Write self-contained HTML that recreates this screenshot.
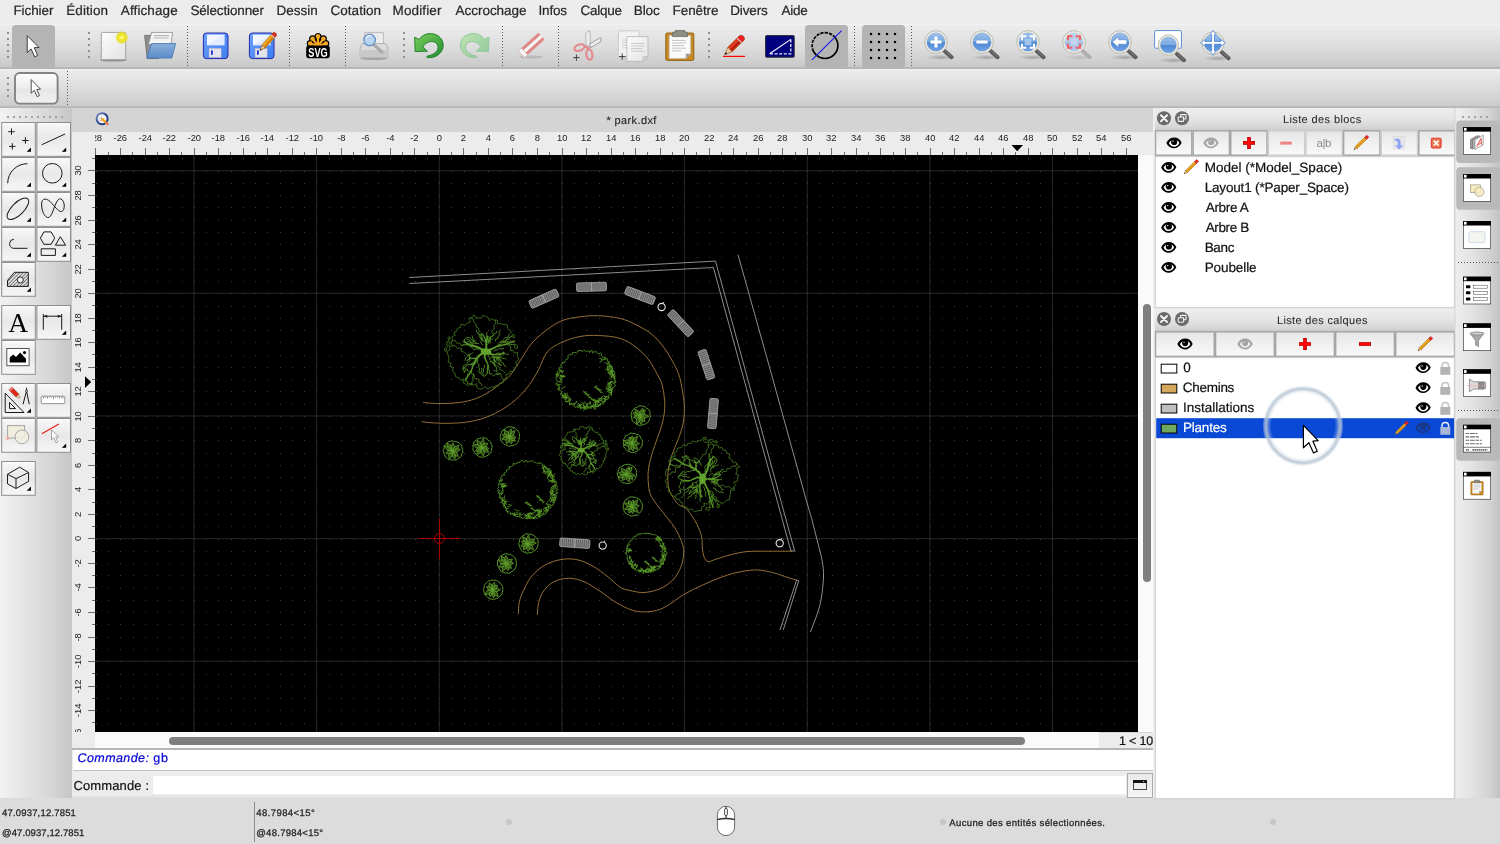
<!DOCTYPE html>
<html lang="fr">
<head>
<meta charset="utf-8">
<title>* park.dxf - QCAD</title>
<style>
html,body{margin:0;padding:0;}
body{width:1500px;height:844px;overflow:hidden;background:#ececec;font-family:"Liberation Sans",sans-serif;color:#262626;position:relative;}
.a{position:absolute;}
.t{position:absolute;white-space:pre;font-family:"Liberation Sans",sans-serif;text-rendering:geometricPrecision;-webkit-text-stroke:0.2px currentColor;}
svg{position:absolute;overflow:visible;}
#menubar{left:0;top:0;width:1500px;height:24px;background:#ececec;}
#tb1{left:0;top:24px;width:1500px;height:45px;background:linear-gradient(#f5f5f5 0%,#ededed 2.5%,#dddddd 50%,#cacaca 94.5%,#b8b8b8 96.5%,#b6b6b6 99%,#c6c6c6 100%);}
#tb2{left:0;top:69px;width:1500px;height:39px;background:linear-gradient(#f2f2f2 0%,#ececec 3%,#dcdcdc 50%,#cccccc 94.5%,#b8b8b8 96.5%,#b6b6b6 100%);}
#left{left:0;top:108px;width:72px;height:690px;background:linear-gradient(90deg,#f2f2f2 0%,#e6e6e6 30%,#d4d4d4 75%,#c6c6c6 100%);}
#mdi{left:72px;top:108px;width:1081px;height:640px;background:#d4d4d4;}
#rtop{left:72px;top:132px;width:1081px;height:23px;background:#ececec;}
#rleft{left:72px;top:132px;width:23px;height:616px;background:#ececec;}
#canvas{left:95px;top:155px;width:1043px;height:577px;background:#000;overflow:hidden;}
#vs{left:1138px;top:155px;width:15px;height:577px;background:#fafafa;}
#hs{left:95px;top:732px;width:1004px;height:16px;background:#fafafa;}
#zl{left:1099px;top:733px;width:54px;height:15px;background:#ececec;}
#cmd{left:72px;top:748px;width:1081px;height:50px;background:#ececec;}
#rdock{left:1153px;top:108px;width:301px;height:690px;background:#ececec;}
#rtb{left:1454px;top:108px;width:46px;height:690px;background:linear-gradient(90deg,#f0f0f0 0%,#e4e4e4 35%,#d2d2d2 80%,#c4c4c4 100%);}
#status{left:0;top:798px;width:1500px;height:46px;background:#dcdcdc;}
.thumb{position:absolute;background:#7f7f7f;border-radius:4px;}
.lb{position:absolute;width:34px;height:34px;box-sizing:border-box;border:1px solid #b4b4b4;background:linear-gradient(#fbfbfb 0%,#f1f1f1 45%,#e6e6e6 50%,#f3f3f3 100%);}
.pb{position:absolute;box-sizing:border-box;border:1px solid #b4b4b4;background:linear-gradient(#fafafa 0%,#efefef 45%,#e4e4e4 55%,#f2f2f2 100%);}
.hdr{position:absolute;background:linear-gradient(#f1f1f1 0%,#e6e6e6 50%,#d6d6d6 100%);}
.list{position:absolute;background:#fff;box-sizing:border-box;border:1px solid #c2c2c2;}
</style>
</head>
<body>
<div id="app" class="a" style="left:0;top:0;width:1500px;height:844px;will-change:transform;">
<div id="menubar" class="a"></div>
<div id="tb1" class="a"></div>
<div id="tb2" class="a"></div>
<div id="left" class="a"></div>
<div id="mdi" class="a"></div>
<div id="rtop" class="a"></div>
<div id="rleft" class="a"></div>
<div id="vs" class="a"><div class="thumb" style="left:5.1px;top:148.7px;width:7.8px;height:278.7px;"></div></div>
<div id="hs" class="a"><div class="thumb" style="left:73.7px;top:5.2px;width:856.8px;height:7.6px;"></div></div>
<div id="zl" class="a"></div>
<div id="cmd" class="a">
 <div class="a" style="left:0;top:0;width:1081px;height:1.5px;background:#b6b6b6"></div>
 <div class="a" style="left:1px;top:1.5px;width:1080px;height:20.5px;background:#fff"></div>
 <div class="a" style="left:1px;top:22px;width:1080px;height:1px;background:#c2c2c2"></div>
 <div class="a" style="left:81px;top:28px;width:973px;height:18px;background:#fff"></div>
 <div class="a" style="left:0;top:46px;width:1055px;height:4px;background:linear-gradient(#efefef,#dedede)"></div>
 <div class="pb" style="left:1055px;top:24.5px;width:26px;height:25.5px;border-color:#ababab;background:linear-gradient(#e9e9e9,#f5f5f5)"></div>
 <svg width="14" height="10" viewBox="0 0 14 10" style="left:1061px;top:32px"><rect x="0.5" y="0.5" width="13" height="9" fill="#f0f0f0" stroke="#4a4a4a"/><rect x="0" y="0" width="14" height="3" fill="#111"/><rect x="10" y="1" width="1.2" height="1" fill="#ccc"/></svg>
</div>
<div id="rdock" class="a"></div>
<div id="rtb" class="a"></div>
<div id="status" class="a">
 <div class="a" style="left:253.5px;top:4px;width:1px;height:40px;background:#8c8c8c"></div>
 <div class="a" style="left:506.3px;top:21px;width:6px;height:6px;border-radius:3px;background:#c6c6c6"></div>
 <div class="a" style="left:940.3px;top:21px;width:6px;height:6px;border-radius:3px;background:#c6c6c6"></div>
 <div class="a" style="left:1269.5px;top:21px;width:6px;height:6px;border-radius:3px;background:#c6c6c6"></div>
</div>
<svg class="a" width="1043" height="23" viewBox="0 0 1043 23" style="left:95px;top:132px;overflow:hidden" font-family="Liberation Sans, sans-serif" font-size="9.4" fill="#1c1c1c" text-anchor="middle"><text x="0.3" y="9.1">-28</text><text x="25.3" y="9.1">-26</text><text x="50.3" y="9.1">-24</text><text x="74.3" y="9.1">-22</text><text x="99.3" y="9.1">-20</text><text x="123.3" y="9.1">-18</text><text x="148.3" y="9.1">-16</text><text x="172.3" y="9.1">-14</text><text x="197.3" y="9.1">-12</text><text x="221.3" y="9.1">-10</text><text x="246.3" y="9.1">-8</text><text x="270.3" y="9.1">-6</text><text x="295.3" y="9.1">-4</text><text x="319.3" y="9.1">-2</text><text x="344.3" y="9.1">0</text><text x="368.3" y="9.1">2</text><text x="393.3" y="9.1">4</text><text x="417.3" y="9.1">6</text><text x="442.3" y="9.1">8</text><text x="467.3" y="9.1">10</text><text x="491.3" y="9.1">12</text><text x="516.3" y="9.1">14</text><text x="540.3" y="9.1">16</text><text x="565.3" y="9.1">18</text><text x="589.3" y="9.1">20</text><text x="614.3" y="9.1">22</text><text x="638.3" y="9.1">24</text><text x="663.3" y="9.1">26</text><text x="687.3" y="9.1">28</text><text x="712.3" y="9.1">30</text><text x="736.3" y="9.1">32</text><text x="761.3" y="9.1">34</text><text x="785.3" y="9.1">36</text><text x="810.3" y="9.1">38</text><text x="835.3" y="9.1">40</text><text x="859.3" y="9.1">42</text><text x="884.3" y="9.1">44</text><text x="908.3" y="9.1">46</text><text x="933.3" y="9.1">48</text><text x="957.3" y="9.1">50</text><text x="982.3" y="9.1">52</text><text x="1006.3" y="9.1">54</text><text x="1031.3" y="9.1">56</text><path d="M0.5 16V23M25.5 16V23M50.5 16V23M74.5 16V23M99.5 16V23M123.5 16V23M148.5 16V23M172.5 16V23M197.5 16V23M221.5 16V23M246.5 16V23M270.5 16V23M295.5 16V23M319.5 16V23M344.5 16V23M368.5 16V23M393.5 16V23M417.5 16V23M442.5 16V23M467.5 16V23M491.5 16V23M516.5 16V23M540.5 16V23M565.5 16V23M589.5 16V23M614.5 16V23M638.5 16V23M663.5 16V23M687.5 16V23M712.5 16V23M736.5 16V23M761.5 16V23M785.5 16V23M810.5 16V23M835.5 16V23M859.5 16V23M884.5 16V23M908.5 16V23M933.5 16V23M957.5 16V23M982.5 16V23M1006.5 16V23M1031.5 16V23M13.5 20V23M37.5 20V23M62.5 20V23M86.5 20V23M111.5 20V23M135.5 20V23M160.5 20V23M184.5 20V23M209.5 20V23M234.5 20V23M258.5 20V23M283.5 20V23M307.5 20V23M332.5 20V23M356.5 20V23M381.5 20V23M405.5 20V23M430.5 20V23M454.5 20V23M479.5 20V23M503.5 20V23M528.5 20V23M552.5 20V23M577.5 20V23M601.5 20V23M626.5 20V23M651.5 20V23M675.5 20V23M700.5 20V23M724.5 20V23M749.5 20V23M773.5 20V23M798.5 20V23M822.5 20V23M847.5 20V23M871.5 20V23M896.5 20V23M920.5 20V23M945.5 20V23M969.5 20V23M994.5 20V23M1018.5 20V23M1043.5 20V23" stroke="#6e6e6e" stroke-width="1" fill="none" shape-rendering="crispEdges"/><path d="M916.5 13H928L922.2 19.2Z" fill="#000"/></svg>
<svg class="a" width="23" height="577" viewBox="0 0 23 577" style="left:72px;top:155px;overflow:hidden" font-family="Liberation Sans, sans-serif" font-size="9.4" fill="#1c1c1c" text-anchor="middle"><text transform="translate(9.4 580.4) rotate(-90)">-16</text><text transform="translate(9.4 555.4) rotate(-90)">-14</text><text transform="translate(9.4 531.4) rotate(-90)">-12</text><text transform="translate(9.4 506.4) rotate(-90)">-10</text><text transform="translate(9.4 482.4) rotate(-90)">-8</text><text transform="translate(9.4 457.4) rotate(-90)">-6</text><text transform="translate(9.4 432.4) rotate(-90)">-4</text><text transform="translate(9.4 408.4) rotate(-90)">-2</text><text transform="translate(9.4 383.4) rotate(-90)">0</text><text transform="translate(9.4 359.4) rotate(-90)">2</text><text transform="translate(9.4 334.4) rotate(-90)">4</text><text transform="translate(9.4 310.4) rotate(-90)">6</text><text transform="translate(9.4 285.4) rotate(-90)">8</text><text transform="translate(9.4 261.4) rotate(-90)">10</text><text transform="translate(9.4 236.4) rotate(-90)">12</text><text transform="translate(9.4 212.4) rotate(-90)">14</text><text transform="translate(9.4 187.4) rotate(-90)">16</text><text transform="translate(9.4 163.4) rotate(-90)">18</text><text transform="translate(9.4 138.4) rotate(-90)">20</text><text transform="translate(9.4 114.4) rotate(-90)">22</text><text transform="translate(9.4 89.4) rotate(-90)">24</text><text transform="translate(9.4 65.4) rotate(-90)">26</text><text transform="translate(9.4 40.4) rotate(-90)">28</text><text transform="translate(9.4 15.4) rotate(-90)">30</text><path d="M16 580.5H23M16 555.5H23M16 531.5H23M16 506.5H23M16 482.5H23M16 457.5H23M16 432.5H23M16 408.5H23M16 383.5H23M16 359.5H23M16 334.5H23M16 310.5H23M16 285.5H23M16 261.5H23M16 236.5H23M16 212.5H23M16 187.5H23M16 163.5H23M16 138.5H23M16 114.5H23M16 89.5H23M16 65.5H23M16 40.5H23M16 15.5H23M20 567.5H23M20 543.5H23M20 518.5H23M20 494.5H23M20 469.5H23M20 445.5H23M20 420.5H23M20 396.5H23M20 371.5H23M20 347.5H23M20 322.5H23M20 298.5H23M20 273.5H23M20 248.5H23M20 224.5H23M20 199.5H23M20 175.5H23M20 150.5H23M20 126.5H23M20 101.5H23M20 77.5H23M20 52.5H23M20 28.5H23M20 3.5H23" stroke="#6e6e6e" stroke-width="1" fill="none" shape-rendering="crispEdges"/><path d="M13 221.2V233L19.2 227Z" fill="#000"/></svg>
<div id="canvas" class="a"><svg width="1043" height="577" viewBox="0 0 1043 577" style="left:0;top:0">
<defs><pattern id="hb" width="2" height="2" patternUnits="userSpaceOnUse"><rect width="2" height="2" fill="#5c5c5c"/><rect width="1" height="2" fill="#8c8c8c"/></pattern></defs>
<path d="M99.00 0V577M221.65 0V577M344.30 0V577M466.95 0V577M589.60 0V577M712.25 0V577M834.90 0V577M957.55 0V577M0 506.25H1043M0 383.60H1043M0 260.95H1043M0 138.30H1043M0 15.65H1043" stroke="#262626" stroke-width="1" fill="none"/>
<path d="M1.5 0V577M13.5 0V577M25.5 0V577M38.5 0V577M50.5 0V577M62.5 0V577M74.5 0V577M87.5 0V577M99.5 0V577M111.5 0V577M123.5 0V577M136.5 0V577M148.5 0V577M160.5 0V577M172.5 0V577M185.5 0V577M197.5 0V577M209.5 0V577M221.5 0V577M234.5 0V577M246.5 0V577M258.5 0V577M271.5 0V577M283.5 0V577M295.5 0V577M307.5 0V577M320.5 0V577M332.5 0V577M344.5 0V577M356.5 0V577M369.5 0V577M381.5 0V577M393.5 0V577M405.5 0V577M418.5 0V577M430.5 0V577M442.5 0V577M455.5 0V577M467.5 0V577M479.5 0V577M491.5 0V577M504.5 0V577M516.5 0V577M528.5 0V577M540.5 0V577M553.5 0V577M565.5 0V577M577.5 0V577M589.5 0V577M602.5 0V577M614.5 0V577M626.5 0V577M639.5 0V577M651.5 0V577M663.5 0V577M675.5 0V577M688.5 0V577M700.5 0V577M712.5 0V577M724.5 0V577M737.5 0V577M749.5 0V577M761.5 0V577M773.5 0V577M786.5 0V577M798.5 0V577M810.5 0V577M822.5 0V577M835.5 0V577M847.5 0V577M859.5 0V577M872.5 0V577M884.5 0V577M896.5 0V577M908.5 0V577M921.5 0V577M933.5 0V577M945.5 0V577M957.5 0V577M970.5 0V577M982.5 0V577M994.5 0V577M1006.5 0V577M1019.5 0V577M1031.5 0V577" stroke="#3f3f3f" stroke-width="1" fill="none" stroke-dasharray="0 3 1 12 1 11 1 11 1 11 1 12 1 11 1 11 1 12 1 11 1 11 1 11 1 12 1 11 1 11 1 11 1 12 1 11 1 11 1 11 1 12 1 11 1 11 1 11 1 12 1 11 1 11 1 12 1 11 1 11 1 11 1 12 1 11 1 11 1 11 1 12 1 11 1 11 1 11 1 12 1 11 1 11 1 12 1 11 1 11 1 11 1 12 1 58" shape-rendering="crispEdges"/>
<g fill="none" stroke="#a47a3c" stroke-width="0.9">
<path d="M328.2 247.5C331 247.7 339 248.6 345 248.6C351 248.6 358.3 248.3 364.2 247.5C370.1 246.7 375.1 245.6 380.2 243.8C385.3 242 390.1 239.4 394.6 236.6C399.1 233.8 403.9 229.8 407.4 227C410.9 224.2 412.2 223.9 415.4 220C418.6 216.1 423.1 208.6 426.6 203.4C430.1 198.2 432.5 193.4 436.2 189C439.9 184.6 443.9 180.9 449 177C454.1 173.1 460.6 168.3 466.6 165.8C472.6 163.3 478.9 162.7 485 161.8C491.1 161 496.7 160.4 503.4 160.7C510.1 161 518.7 161.9 525 163.4C531.3 164.9 535.7 167.1 541 169.8C546.3 172.5 552.2 175.4 557 179.4C561.8 183.4 566.1 188.7 569.8 193.8C573.5 198.9 577 205.4 579.4 209.8C581.8 214.2 582.7 216.5 583.9 220C585.1 223.5 585.7 226 586.6 231C587.5 236 589 244.1 589.3 250.2C589.6 256.3 589.2 262.2 588.2 267.8C587.2 273.4 585.3 278.5 583.4 283.8C581.5 289.1 578.7 294.2 577 299.8C575.3 305.4 573.5 311.8 573 317.4C572.5 323 572.7 328.9 573.8 333.4C574.9 337.9 577.7 341.8 579.4 344.6C581.1 347.4 582.1 348.3 584.2 350C586.3 351.7 589.3 351.4 592.2 354.6C595.1 357.8 599.4 364.5 601.8 369C604.2 373.5 605.7 377.8 606.6 381.8C607.5 385.8 607 389.7 607.4 393C607.8 396.3 608.1 399.5 609 401.8C609.9 404.1 611 406.2 613 406.6C615 407 617 405.4 621 404.2C625 403 631.7 400.7 637 399.4C642.3 398.1 646.7 397 653 396.5C659.3 396 667.7 396.3 675 396.2C682.3 396.2 693.3 396.2 697 396.2"/>
<path d="M326.6 266.7C328.3 266.9 332.6 267.5 337 267.8C341.4 268.1 347.1 268.4 353 268.3C358.9 268.2 365.8 268 372.2 267C378.6 266 385.3 264.5 391.4 262.2C397.5 259.9 403.7 256.7 409 253.4C414.3 250.1 419.1 246.2 423.4 242.2C427.7 238.2 431.3 233.9 434.6 229.4C437.9 224.9 440.5 220.4 443.4 215C446.3 209.6 448.3 201.6 452.2 197C456.1 192.4 461.1 190 466.6 187.4C472.1 184.8 478.9 182.7 485 181.5C491.1 180.3 496.7 180.2 503.4 180.5C510.1 180.8 518.7 181.4 525 183.4C531.3 185.3 536.2 188.6 541 192.2C545.8 195.8 550.2 200.4 553.8 205C557.4 209.6 560.3 215.7 562.6 220C564.9 224.3 566.2 226 567.4 231C568.6 236 569.8 244.1 569.8 250.2C569.8 256.3 568.9 261.7 567.4 267.8C565.9 273.9 563 280.9 561 287C559 293.1 556.7 299 555.4 304.6C554.1 310.2 553.1 315.3 553 320.6C552.9 325.9 553.7 332.5 554.6 336.6C555.5 340.7 556.3 341.5 558.6 345C560.9 348.5 564.7 353.3 568.2 357.8C571.7 362.3 576.3 367.4 579.4 372.2C582.5 377 585 382.3 586.6 386.6C588.2 390.9 588.8 393.5 588.7 397.8C588.6 402.1 587.6 407.7 585.8 412.2C584 416.7 581.3 421.4 577.8 425C574.3 428.6 569.8 431.7 565 433.8C560.2 435.9 554.1 437.2 549 437.5C543.9 437.8 538.6 436.3 534.6 435.4C530.6 434.5 528.6 434.5 525 432.2C521.4 429.9 517.7 425.4 513 421.8C508.3 418.2 502.3 413.5 497 410.6C491.7 407.7 486.3 405.5 481 404.5C475.7 403.5 470.3 403.7 465 404.7C459.7 405.7 453.8 407.8 449 410.6C444.2 413.4 439.7 417.5 436.2 421.8C432.7 426.1 430.2 431.9 428.2 436.2C426.2 440.5 425 443.6 424.2 447.4C423.4 451.2 423.5 457.1 423.4 459"/>
<path d="M442.3 459.9C442.5 458.1 442.5 452.7 443.4 449C444.2 445.3 445.4 441.1 447.4 437.8C449.4 434.5 452.5 431.2 455.4 429C458.3 426.8 461.5 425.4 465 424.5C468.5 423.6 472.2 423 476.2 423.4C480.2 423.8 484.2 424.5 489 426.6C493.8 428.7 499.7 432.7 505 436.2C510.3 439.7 515.5 444.2 521 447.4C526.5 450.6 532.3 453.8 537.8 455.4C543.3 456.9 548.5 457.2 553.8 456.7C559.1 456.2 563.9 455.1 569.8 452.2C575.7 449.3 582.6 443.1 589 439.4C595.4 435.7 601.8 432.7 608.2 429.8C614.6 426.9 621 424 627.4 421.8C633.8 419.6 640.7 417.6 646.6 416.5C652.5 415.4 657.3 414.8 662.6 415C667.9 415.2 673.5 416.5 678.6 417.8C683.7 419.1 689.1 421.4 693 422.6C696.9 423.8 700.3 424.6 701.8 425"/>
</g>
<g fill="none" stroke="#b0b0b0" stroke-width="0.8">
<path d="M314.3 122.5L620.5 106.1L699.6 396"/>
<path d="M314.6 128.5L618.4 112.5L695.9 396"/>
<path d="M695.9 396L699.6 396"/>
<path d="M701.6 425L685 475"/>
<path d="M703.8 425.6L688.2 475"/>
<path d="M701.6 425L703.8 425.6"/>
<path d="M643 99.7L676.7 220L711.2 345"/>
<path d="M711.2 345C712.2 348.3 715.2 358.3 717 365C718.8 371.7 720.4 378.3 722.1 385C723.8 391.7 725.9 398.8 727 405C728.1 411.2 728.7 415.3 728.5 422C728.3 428.7 727.2 438.5 726 445C724.8 451.5 723.3 455.7 721.5 461C719.7 466.3 716.4 474.3 715.4 477"/>
</g>
<g transform="translate(448.9 143.7) rotate(-24)"><rect x="-15.0" y="-4.2" width="30" height="8.4" rx="1.5" fill="url(#hb)" stroke="#a8a8a8" stroke-width="0.8"/><path d="M0 -4.2V4.2" stroke="#b8b8b8" stroke-width="0.7"/><path d="M-14.0 0H14.0" stroke="#7a7a7a" stroke-width="0.6" opacity="0.6"/></g>
<g transform="translate(496.5 131.9) rotate(-1.5)"><rect x="-15.0" y="-4.3" width="30" height="8.6" rx="1.5" fill="url(#hb)" stroke="#a8a8a8" stroke-width="0.8"/><path d="M0 -4.3V4.3" stroke="#b8b8b8" stroke-width="0.7"/><path d="M-14.0 0H14.0" stroke="#7a7a7a" stroke-width="0.6" opacity="0.6"/></g>
<g transform="translate(545 140.5) rotate(21)"><rect x="-15.25" y="-4.2" width="30.5" height="8.4" rx="1.5" fill="url(#hb)" stroke="#a8a8a8" stroke-width="0.8"/><path d="M0 -4.2V4.2" stroke="#b8b8b8" stroke-width="0.7"/><path d="M-14.25 0H14.25" stroke="#7a7a7a" stroke-width="0.6" opacity="0.6"/></g>
<g transform="translate(585.6 168.2) rotate(47)"><rect x="-15.25" y="-4.2" width="30.5" height="8.4" rx="1.5" fill="url(#hb)" stroke="#a8a8a8" stroke-width="0.8"/><path d="M0 -4.2V4.2" stroke="#b8b8b8" stroke-width="0.7"/><path d="M-14.25 0H14.25" stroke="#7a7a7a" stroke-width="0.6" opacity="0.6"/></g>
<g transform="translate(611.4 209.6) rotate(72)"><rect x="-15.0" y="-4.2" width="30" height="8.4" rx="1.5" fill="url(#hb)" stroke="#a8a8a8" stroke-width="0.8"/><path d="M0 -4.2V4.2" stroke="#b8b8b8" stroke-width="0.7"/><path d="M-14.0 0H14.0" stroke="#7a7a7a" stroke-width="0.6" opacity="0.6"/></g>
<g transform="translate(618 258.5) rotate(95)"><rect x="-15.0" y="-4.3" width="30" height="8.6" rx="1.5" fill="url(#hb)" stroke="#a8a8a8" stroke-width="0.8"/><path d="M0 -4.3V4.3" stroke="#b8b8b8" stroke-width="0.7"/><path d="M-14.0 0H14.0" stroke="#7a7a7a" stroke-width="0.6" opacity="0.6"/></g>
<g transform="translate(479.8 388.2) rotate(4)"><rect x="-15.0" y="-4.3" width="30" height="8.6" rx="1.5" fill="url(#hb)" stroke="#a8a8a8" stroke-width="0.8"/><path d="M0 -4.3V4.3" stroke="#b8b8b8" stroke-width="0.7"/><path d="M-14.0 0H14.0" stroke="#7a7a7a" stroke-width="0.6" opacity="0.6"/></g>
<g transform="translate(566.6 152)" fill="none" stroke="#e6e6e6"><circle r="3.6" stroke-width="1.1"/><path d="M1.2 -4.2L2.6 -4.8" stroke-width="0.9"/></g>
<g transform="translate(507.7 390.6)" fill="none" stroke="#e6e6e6"><circle r="3.6" stroke-width="1.1"/><path d="M1.2 -4.2L2.6 -4.8" stroke-width="0.9"/></g>
<g transform="translate(684.7 388.2)" fill="none" stroke="#e6e6e6"><circle r="3.6" stroke-width="1.1"/><path d="M1.2 -4.2L2.6 -4.8" stroke-width="0.9"/></g>
<g fill="none" stroke="#ac0000" stroke-width="1"><path d="M324.0 383.5H365.0M344.5 363.5V404.0"/><circle cx="344.5" cy="383.5" r="5"/></g>
<g stroke-linejoin="round">
<g transform="translate(390.6 196.4) rotate(0) scale(1.0 1.0)" fill="none" stroke="#477c1f" stroke-width="0.800"><path d="M-37.4 3.9L-38.8 0.3L-36 -1.6L-36 -5L-32.5 -6L-35 -8.4L-33.4 -10.8L-33.5 -14.9L-30.4 -16L-31.6 -19.2L-28.8 -20.3L-28.2 -23.2L-25.3 -23.8L-24.4 -27.4L-20.4 -26L-18.2 -28.5L-15.2 -29.7L-16.8 -33.2L-13.9 -33.6L-11.7 -36.8L-9.9 -33.7L-7.2 -33.6L-4.3 -33.1L-3 -35.7L-1.1 -35.5L2.2 -34.3L3.8 -30.8L6.3 -32.7L8.3 -31.3L11.8 -31.2L11.9 -27.7L14.1 -27.8L17.9 -27L21.6 -26.4L22 -22.9L25.9 -19.5L23.2 -16.8L21.6 -12.7L18 -8.4L21.9 -9.4L23.1 -6.8L25.3 -4.4L24.7 -0.8L27.5 -1.1L28.7 1.7L32.3 1.2L31.7 4.5L33.2 8.2L30 10.8L32 14.3L29.4 16.1L27.5 20.4L24.4 19.5L23.8 22.4L20.3 23.2L20.9 26.7L18.1 27.8L17.4 31.4L13.9 31.9L12.6 34.8L9.8 34.3L8.4 36.7L6.1 35.3L2.5 37.5L-0.8 35L-3.5 37.6L-6.3 37.5L-8.6 36L-8.9 32.3L-11.8 34.1L-14.5 31.9L-17 34.3L-19 33.2L-22.2 31.5L-22.2 27.5L-25 28.9L-26.6 26.7L-30.1 25.1L-30.7 21.6L-33.3 19.5L-32.2 16L-35.7 14.9L-34.5 11.9L-37.6 10.6L-36.5 6.7ZM-33.9 -10.4L-30.5 -11.2L-28.8 -8.1L-25.8 -8.4L-24 -5.4L-20.8 -7.4L-17.6 -6.7M23.7 -16.1L22.4 -13.4L19.2 -14L17.5 -10.6L13.9 -9.4L11.7 -5.3M-33.8 -5.3L-30.4 -5.7L-28.2 -3L-24.3 -3.3L-24 -0L-21.4 0.7L-18.7 3.5L-15.6 4.4L-16.1 6.5L-15.4 9.6L-18.1 10.7L-18.9 13.4L-22 13.9L-22.9 16.5M17.6 0L18.3 3L16.4 4.1L14.2 6.3L11.3 4.4L9.7 6.2L7.3 8.4L8.9 10.3L9.4 14L12.9 14.8L14 18.1L17.4 19.3L19.7 21.9M-23.4 17.7L-19.8 16.9L-17.6 19.7L-13.7 19.4L-14.3 22.4L-11.2 23.5L-11.3 26.8L-6.3 27.9L-6.9 30.9L-4.3 32.2L-3.7 34.6M7.6 19.3L10.7 19.3L11.6 22.5L15.2 22.3L15.9 26.1L18.7 28.3M-15.5 -34L-12.4 -32.5L-12 -29.4L-9.5 -27.6L-9.6 -24.6L-7 -23.2L-6.7 -20.4L-4.8 -18.7M9.3 -31.7L10.4 -28.4L8.1 -25.9L8.8 -22.7L6.1 -20.4L7.8 -16.9L5.9 -14.4M29.3 -7.5L32 -5.9L31.4 -2.7L29.1 -3.7ZM26.7 -17.1L29.3 -16L28.8 -13.9L26.3 -14.4ZM-38.9 -9.6L-36.8 -10.7L-35.9 -6.9L-38.4 -4.8ZM-41.3 -2.7L-39.4 -3.7L-38.9 -1.1L-40.5 0ZM-37.6 -13.9L-35.9 -14.6L-35.5 -12.3L-37.3 -11.7Z"/><path d="M-4.2 -18L-4.9 -14.7L-4.1 -12L-2.1 -10.4L0 -9.6M1.3 -15.2L4 -14.3L2.6 -12.1L2.7 -9.6M5.5 -14.7L4.3 -11.4L4.8 -8M-21.7 -11L-20 -13.2L-17.8 -14.1L-15.4 -13.5L-14.1 -11.5L-11.5 -10L-10.1 -7.5M-23 -9.3L-20.7 -9.5L-19.1 -8.3L-17.6 -6.7M-24.1 -6.2L-20.9 -6.4L-17.6 -6.7M11.5 -4.6L12.8 -6.6L15.2 -6.8L16.6 -8.8L18.7 -9.1L20.6 -10.4L22.8 -9.5L24.7 -10.6L26.8 -9.9L28.8 -10.7M18.7 -6.2L20.8 -7.2L22.9 -6.2L25 -7.1L27.3 -6.6L29.3 -7.5M14.5 -8.6L16.4 -10L18.8 -10L20.4 -11.7L23.1 -12.2L24.4 -14.4L26.7 -15.5M-14.7 19.4L-15.6 21.7L-18 22.7L-18 24.9L-19.7 26.4L-19.7 28.6L-20.8 30.4M-20.2 28.5L-18.4 30L-17.8 32.4L-15.6 32.4L-13.5 33.6L-13.8 30.8L-12.4 28.3L-13.1 26.1L-11.9 24L-12.3 21.9M-12.3 13L-14.9 13.6L-17.8 13L-19.7 15.3L-22.7 16.6L-21.7 18.6L-21.3 21.2L-19.9 18.8L-17.6 17.6M1.3 21.6L0.4 23.9L-1.3 24.9L-3.1 21.8L-2 19.8L-2.3 17.5L-0.9 15.6L-1.1 13.3M1.9 13.4L3.3 15.4L2.7 17.6L3.9 19.7L3.6 22.2L6 22.7L8.1 24.4L10 22.8L12.4 23.1L14.4 21.9M-4.2 16.4L-3.7 19.3L-5.1 22.1L-3.2 23.3L-2.1 25.1M14.1 2.6L13.3 5.1L11.3 6.8L10.4 9.3L8.5 11.2M-15.1 6.7L-17.2 3.5L-15.2 6.9M-9.4 7L-7.8 8.9L-8.2 11.4L-6.5 13.3L-6.9 15.5L-6.1 17.6L-6.7 19.8L-5.9 21.9M3 -7.6L3.7 -11.2L6.1 -11.8L7.8 -13.4M-6.6 -7.9L-9.3 -7.8L-11.4 -9.9L-13.8 -8.9L-16.2 -9.7L-18.6 -9.2M11 7L15 5.5L16.6 7.2L18.8 6.8L20.6 8M11.6 6.4L14 7.8L15.1 10.2L17.5 11.5L18.5 14.1L20.7 15.5M7.1 6L9 7.2L8.9 9.7L10.8 10.5L12.9 12.9L15.8 13.6M-6.6 -1.9L-8.9 -2.5L-10.1 -4.6L-12.8 -4.8L-15.1 -6.1M-9.5 11.3L-11.5 13.4L-13.8 12.4L-16 13M6.1 4.8L8.5 6.3L9.1 8.8L9.7 10.4M-12.8 0.9L-14.2 2.7L-16.4 2.9L-17.6 4.4L-19.9 6.5L-20.6 9.4M5 6.4L7.3 5.4L9.3 6.3L11.9 6.4L13.5 8.5L16 8.8M-2.1 -10.9L-3.8 -13.2L-3.8 -16.2L-6.2 -16.9L-7.6 -18.7M3.9 10.8L6.1 10.1L7.4 12.4L9.7 13.3M1.8 -6.5L0.6 -8.7L1.6 -10.8L0.6 -12.9L1.8 -15L1 -17.1L1.5 -19.2M9.6 -9.9L9.9 -12.2L12.2 -12.9L12.5 -15L14.1 -16.8L13.4 -19.1L14.5 -21M-9.7 -2L-12.1 -2L-13.4 -3.8L-15.5 -5L-16.8 -7M-2.4 -6L-5.1 -8.9L-3.5 -11.4L-3.6 -14.2M4.7 2.2L6.9 2.7L8 4.8L10.3 5L12.3 6.6L14.7 6.9M-9.9 -10.6L-12.3 -11.3L-12.9 -13.3L-13.6 -16M0.2 -6.3L1 -8.3L2.9 -9.3L3.5 -11.4L5.4 -13.4M3.1 -12.3L4.9 -14.7L7.8 -15.5L8.5 -17.7L10.8 -18.6L11.5 -20.7M-9.6 7.6L-10.2 9.8L-12 10.7L-14.7 12.7M-12.3 -7.1L-14.6 -8.4L-15.6 -11L-19.3 -12.4M8.3 0.2L9.7 -1.7L11.9 -1.5L13.6 -3.1L16.1 -2.4L18.4 -3.1M6.1 10L8.4 11.7L8.8 14.5L10.8 15.9L11 18.3L12.5 19.9M1.9 4.8L4.1 6L4.2 8.6L6.9 11.2M-4.6 -12.2L-6.4 -15L-6.5 -17.4L-8.6 -18.7L-9.1 -20.9M10.8 2L13.3 1.6L15.7 2.7L18.2 1.9L20.8 3.1L23.4 2.5M-11.2 -8.2L-13.2 -7L-15.3 -7.5L-17.7 -7.6L-19.5 -8.8M11.5 7.8L13.3 10.4L14.1 12.8L16.1 14.2M-6.9 2.8L-6.5 5.3L-7.8 7.3L-9.2 10L-11.3 12.1" stroke="#5a9a28"/><path d="M-0.5 0.9L-9.3 -4.2L-17.8 -6.3L-22.1 -11L-21.6 -11.4L-17.4 -7.1L-8.8 -5.4L0.5 -0.9ZM-0.9 -0.1L0.1 -4.8L0.1 -9L-1.4 -14.2L-3.9 -17.7L-3.5 -18L-0.8 -14.5L1 -9.1L1.4 -4.8L0.9 0.1ZM0.1 -9.2L1.5 -12.5L1.1 -15.4L1.6 -15.5L2.1 -12.4L0.9 -8.9ZM-0.4 -0.9L6.7 -3.3L11 -5.5L18.6 -7.1L29.2 -10.4L29.4 -9.9L18.8 -6.4L11.4 -4.5L7.2 -2.1L0.4 0.9ZM0.6 0.9L-5.4 4.3L-8.6 7.3L-11.8 13.5L-14.1 19.9L-19.5 28.4L-19.9 28.1L-14.7 19.6L-12.7 13.2L-9.5 6.6L-6.3 3.1L-0.6 -0.9ZM0.9 0.2L-0.5 5.8L2.8 13.3L1.8 21.9L1.4 21.8L2.1 13.4L-1.6 6L-0.9 -0.2ZM0.4 -0.7L6 2.7L14.3 2.5L18.6 0.8L18.8 1.3L14.5 3.2L5.8 3.7L-0.4 0.7ZM-9.1 7.4L-15.4 7.2L-18.5 9.3L-18.8 8.9L-15.5 6.6L-9.1 6.5ZM-4.6 -1L-2.2 -2.6L0.6 -3L3 -2.2L5.4 -0.3L5.6 2L3 3.4L0.4 3.2L-2.4 3L-4.4 1.4Z" fill="#62a42c" stroke="#62a42c" stroke-width="0.500"/></g>
<g transform="translate(486.5 295) rotate(0) scale(-0.66 0.66)" fill="none" stroke="#477c1f" stroke-width="1.212"><path d="M-37.4 4L-38.9 0.3L-36.2 -1.8L-35.8 -4.8L-33 -5.9L-34.8 -8.4L-33.3 -10.8L-33.7 -15L-30.4 -16L-31.4 -19.2L-28.5 -20L-28.4 -23.4L-25.2 -23.8L-24.3 -27.1L-20.5 -26.5L-18.9 -28.9L-15.9 -30.1L-16.7 -33.1L-14.1 -34L-11.7 -36.8L-10 -33.6L-7.3 -33.9L-4.2 -32.8L-2.9 -35.6L-1 -35.6L2.6 -34.7L3.8 -30.4L6.3 -32.4L8 -30.9L11.9 -31.2L12.1 -27.9L14.2 -27.6L18.1 -27.2L21.4 -26.2L21.9 -22.9L25.8 -19.5L23.4 -16.5L20.9 -13.1L18.3 -8.9L21.9 -9.5L23 -6.7L25.5 -4.5L24.5 -0.6L27.7 -1.5L28.9 1.4L32 1.3L31.8 4.5L33.7 8.4L30 10.8L31.8 14.2L29.1 15.9L27.6 20.6L24.5 19.7L23.9 22.5L20.9 23.6L20.8 26.6L18 27.6L17.3 31.4L13.9 31.8L12.7 35L9.9 34.3L8.5 37.1L6 35.8L2.5 37.3L-0.8 34.9L-3.4 37.7L-6.1 37.4L-9.2 36.3L-9 32.9L-11.8 34.4L-14.5 32.3L-16.9 34.5L-19.1 33.3L-21.8 31.3L-22.2 27.3L-25 28.9L-26.7 26.8L-30.1 25.2L-30.7 21.6L-33.3 19.5L-32.6 16.1L-35.8 15L-34.4 11.9L-37.6 10.6L-36.6 6.7ZM-34.1 -10L-30.6 -10.9L-28.6 -8.5L-25.6 -8.9L-24 -5.5L-20.8 -7.3L-17.6 -6.7M23.6 -16.1L22.4 -13.4L19.2 -14L17.5 -10.6L13.9 -9.4L11.7 -5.3M-33.8 -5.3L-30.4 -5.8L-28.4 -2.5L-24 -3.5L-24.1 0.1L-21.5 1.1L-18.3 3.3L-15.4 4.3L-16.3 6.4L-15.5 9.6L-18.1 10.7L-18.7 13.6L-21.8 14.1L-22.9 16.5M17.7 0.1L18.3 3L16.3 3.5L14.2 6.4L11.4 5L9.8 6.2L7.3 8.4L8.5 10.7L9.2 14.2L12.9 14.8L13.7 18.4L17.7 18.9L19.7 21.9M-23.2 17.2L-19.8 16.9L-17.5 19.4L-13.4 19.2L-14.2 22.4L-11.5 23.7L-11.6 27.2L-6.1 27.9L-6.5 30.7L-4 32.1L-3.7 34.6M7.3 19.7L10.7 19.3L11.7 22.4L15.4 22.1L15.5 26.4L18.7 28.3M-15.4 -34.1L-12.2 -32.6L-12.4 -29.2L-9.1 -27.8L-9.8 -24.4L-6.6 -23.4L-6.8 -20.4L-4.8 -18.7M9.3 -31.7L10.5 -28.3L7.8 -26L8.5 -22.8L6.2 -20.3L7.8 -16.9L5.9 -14.4M29.3 -7.5L32 -5.9L31.4 -2.7L29.1 -3.7ZM26.7 -17.1L29.3 -16L28.8 -13.9L26.3 -14.4ZM-38.9 -9.6L-36.8 -10.7L-35.9 -6.9L-38.4 -4.8ZM-41.3 -2.7L-39.4 -3.7L-38.9 -1.1L-40.5 0ZM-37.6 -13.9L-35.9 -14.6L-35.5 -12.3L-37.3 -11.7Z"/><path d="M-4.2 -18L-4.9 -14.7L-4.2 -11.9L-2 -10.6L0 -9.6M1.2 -15L4.1 -14.3L2.9 -12.1L2.7 -9.6M5.6 -14.6L4.1 -11.3L4.8 -8M-21.5 -10.7L-20 -13.2L-17.8 -14L-15.5 -13.4L-14.1 -11.5L-11.7 -9.9L-10.1 -7.5M-23 -9.1L-20.7 -9.4L-18.9 -8.4L-17.6 -6.7M-24.1 -6.3L-20.9 -6.2L-17.6 -6.7M11.5 -4.6L12.9 -6.4L15.1 -7.1L16.6 -8.8L18.7 -9.1L20.6 -10.3L22.8 -9.5L24.7 -10.8L26.8 -10.1L28.8 -10.7M18.7 -6.5L20.8 -7.1L22.9 -6.3L25 -7L27.3 -6.6L29.3 -7.5M14.5 -8.7L16.4 -10.1L18.8 -10.1L20.4 -11.7L22.9 -12.4L24.5 -14.3L26.7 -15.5M-14.6 19.5L-15.8 21.5L-18 22.8L-18.1 24.9L-19.7 26.4L-19.6 28.7L-20.8 30.4M-20.2 28.5L-18.4 30L-17.8 32.4L-15.5 32.4L-13.3 33.7L-13.7 30.9L-12.4 28.3L-13.2 26.1L-11.9 24L-12.3 21.9M-12.3 13L-14.9 13.8L-17.9 12.9L-19.8 15.2L-22.9 16.6L-21.5 18.6L-21.3 21.3L-19.9 18.8L-17.6 17.6M1.3 21.5L0.3 23.7L-1.1 24.9L-3 21.8L-1.8 19.8L-2.2 17.5L-1.1 15.5L-1.1 13.3M2.2 13.4L3.1 15.4L2.7 17.7L3.7 19.7L3.6 22.1L6.1 22.4L8.1 24.3L9.9 22.7L12.4 23L14.4 21.9M-4.1 16.4L-3.7 19.3L-5.2 22.2L-3.2 23.2L-2.1 25.1M14.2 2.7L13.4 5.2L11.1 6.7L10.5 9.3L8.5 11.2M-15 6.6L-17.3 3.5L-15.2 6.9M-9.5 7.1L-8 9L-8 11.3L-6.5 13.3L-7 15.5L-6 17.5L-6.7 19.8L-5.9 21.9M3 -7.6L3.7 -11.2L6.1 -11.8L7.8 -13.4M-6.6 -7.9L-9.3 -7.8L-11.4 -9.9L-13.8 -8.9L-16.2 -9.7L-18.6 -9.2M11 7L15 5.5L16.6 7.2L18.8 6.8L20.6 8M11.6 6.4L14 7.8L15.1 10.2L17.5 11.5L18.5 14.1L20.7 15.5M7.1 6L9 7.2L8.9 9.7L10.8 10.5L12.9 12.9L15.8 13.6M-6.6 -1.9L-8.9 -2.5L-10.1 -4.6L-12.8 -4.8L-15.1 -6.1M-9.5 11.3L-11.5 13.4L-13.8 12.4L-16 13M6.1 4.8L8.5 6.3L9.1 8.8L9.7 10.4M-12.8 0.9L-14.2 2.7L-16.4 2.9L-17.6 4.4L-19.9 6.5L-20.6 9.4M5 6.4L7.3 5.4L9.3 6.3L11.9 6.4L13.5 8.5L16 8.8M-2.1 -10.9L-3.8 -13.2L-3.8 -16.2L-6.2 -16.9L-7.6 -18.7M3.9 10.8L6.1 10.1L7.4 12.4L9.7 13.3M1.8 -6.5L0.6 -8.7L1.6 -10.8L0.6 -12.9L1.8 -15L1 -17.1L1.5 -19.2M9.6 -9.9L9.9 -12.2L12.2 -12.9L12.5 -15L14.1 -16.8L13.4 -19.1L14.5 -21M-9.7 -2L-12.1 -2L-13.4 -3.8L-15.5 -5L-16.8 -7M-2.4 -6L-5.1 -8.9L-3.5 -11.4L-3.6 -14.2M4.7 2.2L6.9 2.7L8 4.8L10.3 5L12.3 6.6L14.7 6.9M-9.9 -10.6L-12.3 -11.3L-12.9 -13.3L-13.6 -16M0.2 -6.3L1 -8.3L2.9 -9.3L3.5 -11.4L5.4 -13.4M3.1 -12.3L4.9 -14.7L7.8 -15.5L8.5 -17.7L10.8 -18.6L11.5 -20.7M-9.6 7.6L-10.2 9.8L-12 10.7L-14.7 12.7M-12.3 -7.1L-14.6 -8.4L-15.6 -11L-19.3 -12.4M8.3 0.2L9.7 -1.7L11.9 -1.5L13.6 -3.1L16.1 -2.4L18.4 -3.1M6.1 10L8.4 11.7L8.8 14.5L10.8 15.9L11 18.3L12.5 19.9M1.9 4.8L4.1 6L4.2 8.6L6.9 11.2M-4.6 -12.2L-6.4 -15L-6.5 -17.4L-8.6 -18.7L-9.1 -20.9M10.8 2L13.3 1.6L15.7 2.7L18.2 1.9L20.8 3.1L23.4 2.5M-11.2 -8.2L-13.2 -7L-15.3 -7.5L-17.7 -7.6L-19.5 -8.8M11.5 7.8L13.3 10.4L14.1 12.8L16.1 14.2M-6.9 2.8L-6.5 5.3L-7.8 7.3L-9.2 10L-11.3 12.1" stroke="#5a9a28"/><path d="M-0.5 0.9L-9.3 -4.2L-17.8 -6.3L-22.1 -11L-21.6 -11.4L-17.4 -7.1L-8.8 -5.4L0.5 -0.9ZM-0.9 -0.1L0.1 -4.8L0.1 -9L-1.4 -14.2L-3.9 -17.7L-3.5 -18L-0.8 -14.5L1 -9.1L1.4 -4.8L0.9 0.1ZM0.1 -9.2L1.5 -12.5L1.1 -15.4L1.6 -15.5L2.1 -12.4L0.9 -8.9ZM-0.4 -0.9L6.7 -3.3L11 -5.5L18.6 -7.1L29.2 -10.4L29.4 -9.9L18.8 -6.4L11.4 -4.5L7.2 -2.1L0.4 0.9ZM0.6 0.9L-5.4 4.3L-8.6 7.3L-11.8 13.5L-14.1 19.9L-19.5 28.4L-19.9 28.1L-14.7 19.6L-12.7 13.2L-9.5 6.6L-6.3 3.1L-0.6 -0.9ZM0.9 0.2L-0.5 5.8L2.8 13.3L1.8 21.9L1.4 21.8L2.1 13.4L-1.6 6L-0.9 -0.2ZM0.4 -0.7L6 2.7L14.3 2.5L18.6 0.8L18.8 1.3L14.5 3.2L5.8 3.7L-0.4 0.7ZM-9.1 7.4L-15.4 7.2L-18.5 9.3L-18.8 8.9L-15.5 6.6L-9.1 6.5ZM-4.6 -1L-2.2 -2.6L0.6 -3L3 -2.2L5.4 -0.3L5.6 2L3 3.4L0.4 3.2L-2.4 3L-4.4 1.4Z" fill="#62a42c" stroke="#62a42c" stroke-width="0.758"/></g>
<g transform="translate(607.9 323.4) rotate(90) scale(1.0 1.0)" fill="none" stroke="#477c1f" stroke-width="0.800"><path d="M-37.5 3.9L-38.9 0.3L-36.2 -1.8L-36.2 -5.3L-32.8 -5.9L-34.7 -8.4L-33.4 -10.9L-33.3 -14.8L-30.3 -16L-31 -19L-28.5 -20L-28.1 -23.1L-25.1 -23.7L-24.3 -27.1L-20.4 -25.9L-18.6 -28.8L-16 -30.1L-16.2 -32.9L-14.1 -34L-11.6 -37L-10.2 -33.2L-7.5 -34.3L-4.2 -32.8L-3.2 -36.2L-1.6 -35L2.6 -34.6L3.8 -30.6L6.3 -33.1L8.3 -31.2L11.7 -31.1L11.8 -27.6L14.1 -27.6L18 -27.1L21.5 -26.3L22.1 -23L25.8 -19.5L23.3 -16.6L21.5 -12.8L18 -8.3L21.9 -9.4L22.9 -6.7L25.8 -4.5L24.7 -0.9L27.7 -1.6L28.9 1.4L32.1 1.3L32.3 4.6L33.3 8.3L30.6 11L31.6 14.2L29 15.8L27.6 20.6L24.7 20.1L23.8 22.4L20.8 23.5L20.8 26.6L18.1 27.7L17.2 31.3L14.1 32.4L12.7 35.1L9.5 33.6L8.4 36.7L6.1 35.5L2.4 37.7L-0.7 35.1L-3.5 37.5L-5.7 37.3L-9.2 36.3L-8.9 32.4L-11.8 34.1L-14.5 32.1L-16.9 34.7L-18.5 33L-22.2 31.5L-22.2 27.5L-25.1 29.1L-26.4 26.6L-30.3 25.3L-30.8 21.6L-33.9 19.7L-32.5 16.1L-35.6 14.9L-34.6 11.9L-37.4 10.5L-36.2 6.6ZM-34 -10.3L-30.6 -10.9L-28.8 -8.1L-25.7 -8.6L-24 -5.9L-20.8 -7.4L-17.6 -6.7M23.5 -16.4L22.1 -13.8L19.3 -13.9L17.4 -10.7L13.5 -9.7L11.7 -5.3M-33.9 -4.9L-30.4 -5.7L-28.1 -3.2L-24.4 -3.2L-24 -0L-21.5 1L-18.1 3.2L-15.3 4.2L-15.8 6.6L-15.7 9.4L-18.1 10.7L-18.7 13.7L-21.6 14.3L-22.9 16.5M17.8 0.1L18.3 3L16.3 3.6L14.1 5.8L11.4 4.9L10 6.3L7.3 8.4L8.7 10.5L9.5 14L13 14.7L13.9 18.2L17.4 19.3L19.7 21.9M-23.2 17.4L-19.6 16.4L-17.6 19.7L-13.7 19.4L-14.2 22.4L-11.1 23.4L-11.3 26.8L-6 27.8L-6.6 30.8L-4.1 32.2L-3.7 34.6M7.6 19.3L10.5 19.5L11.8 22.2L14.8 22.6L15.9 26.1L18.7 28.3M-14.9 -34.3L-12 -32.7L-12.4 -29.2L-9.7 -27.5L-9.8 -24.4L-6.9 -23.3L-6.9 -20.3L-4.8 -18.7M9.2 -31.7L10.2 -28.4L8 -26L8.9 -22.7L6.6 -20.2L7.8 -16.9L5.9 -14.4M29.3 -7.5L32 -5.9L31.4 -2.7L29.1 -3.7ZM26.7 -17.1L29.3 -16L28.8 -13.9L26.3 -14.4ZM-38.9 -9.6L-36.8 -10.7L-35.9 -6.9L-38.4 -4.8ZM-41.3 -2.7L-39.4 -3.7L-38.9 -1.1L-40.5 0ZM-37.6 -13.9L-35.9 -14.6L-35.5 -12.3L-37.3 -11.7Z"/><path d="M-4 -17.9L-4.9 -14.7L-4 -12.1L-2 -10.5L0 -9.6M1.2 -15.1L4 -14.3L2.9 -12.1L2.7 -9.6M5.6 -14.6L4.1 -11.3L4.8 -8M-21.5 -10.7L-20.1 -13.3L-17.7 -14.2L-15.5 -13.4L-14.1 -11.5L-11.6 -9.9L-10.1 -7.5M-23 -9.2L-20.7 -9.6L-19 -8.3L-17.6 -6.7M-24.1 -6.4L-20.9 -6.1L-17.6 -6.7M11.4 -4.7L12.8 -6.6L15.1 -7L16.6 -8.8L18.7 -9.2L20.6 -10.2L22.8 -9.5L24.7 -10.6L26.8 -9.9L28.8 -10.7M18.7 -6.2L20.8 -7.3L22.9 -6.3L25 -7.3L27.3 -6.7L29.3 -7.5M14.5 -8.6L16.4 -10.2L18.8 -10L20.5 -11.7L22.9 -12.4L24.5 -14.3L26.7 -15.5M-14.7 19.4L-15.6 21.7L-18 22.7L-18.1 24.9L-19.7 26.4L-19.7 28.7L-20.8 30.4M-20 28.4L-18.4 30L-17.7 32.2L-15.5 32.3L-13.6 33.6L-13.8 30.8L-12.2 28.3L-13.2 26.1L-11.9 24L-12.3 21.9M-12.3 12.9L-14.9 13.8L-17.9 12.9L-19.7 15.3L-22.7 16.6L-21.5 18.6L-21.5 21L-19.8 18.9L-17.6 17.6M1.2 21.4L0.3 23.7L-1.3 24.9L-3.2 21.8L-1.9 19.8L-2.1 17.5L-1.2 15.5L-1.1 13.3M2.1 13.4L3.1 15.4L2.5 17.7L3.7 19.7L3.5 22.3L6.1 22.4L8.1 24.4L9.9 22.7L12.4 23.1L14.4 21.9M-4.1 16.4L-3.9 19.3L-5.1 22.1L-3 23.1L-2.1 25.1M14 2.6L13.2 5.1L11.2 6.8L10.5 9.3L8.5 11.2M-15.2 6.8L-17.2 3.5L-15.2 6.9M-9.3 7L-7.8 8.9L-7.9 11.3L-6.6 13.3L-7.1 15.5L-6 17.5L-6.7 19.8L-5.9 21.9M3 -7.6L3.7 -11.2L6.1 -11.8L7.8 -13.4M-6.6 -7.9L-9.3 -7.8L-11.4 -9.9L-13.8 -8.9L-16.2 -9.7L-18.6 -9.2M11 7L15 5.5L16.6 7.2L18.8 6.8L20.6 8M11.6 6.4L14 7.8L15.1 10.2L17.5 11.5L18.5 14.1L20.7 15.5M7.1 6L9 7.2L8.9 9.7L10.8 10.5L12.9 12.9L15.8 13.6M-6.6 -1.9L-8.9 -2.5L-10.1 -4.6L-12.8 -4.8L-15.1 -6.1M-9.5 11.3L-11.5 13.4L-13.8 12.4L-16 13M6.1 4.8L8.5 6.3L9.1 8.8L9.7 10.4M-12.8 0.9L-14.2 2.7L-16.4 2.9L-17.6 4.4L-19.9 6.5L-20.6 9.4M5 6.4L7.3 5.4L9.3 6.3L11.9 6.4L13.5 8.5L16 8.8M-2.1 -10.9L-3.8 -13.2L-3.8 -16.2L-6.2 -16.9L-7.6 -18.7M3.9 10.8L6.1 10.1L7.4 12.4L9.7 13.3M1.8 -6.5L0.6 -8.7L1.6 -10.8L0.6 -12.9L1.8 -15L1 -17.1L1.5 -19.2M9.6 -9.9L9.9 -12.2L12.2 -12.9L12.5 -15L14.1 -16.8L13.4 -19.1L14.5 -21M-9.7 -2L-12.1 -2L-13.4 -3.8L-15.5 -5L-16.8 -7M-2.4 -6L-5.1 -8.9L-3.5 -11.4L-3.6 -14.2M4.7 2.2L6.9 2.7L8 4.8L10.3 5L12.3 6.6L14.7 6.9M-9.9 -10.6L-12.3 -11.3L-12.9 -13.3L-13.6 -16M0.2 -6.3L1 -8.3L2.9 -9.3L3.5 -11.4L5.4 -13.4M3.1 -12.3L4.9 -14.7L7.8 -15.5L8.5 -17.7L10.8 -18.6L11.5 -20.7M-9.6 7.6L-10.2 9.8L-12 10.7L-14.7 12.7M-12.3 -7.1L-14.6 -8.4L-15.6 -11L-19.3 -12.4M8.3 0.2L9.7 -1.7L11.9 -1.5L13.6 -3.1L16.1 -2.4L18.4 -3.1M6.1 10L8.4 11.7L8.8 14.5L10.8 15.9L11 18.3L12.5 19.9M1.9 4.8L4.1 6L4.2 8.6L6.9 11.2M-4.6 -12.2L-6.4 -15L-6.5 -17.4L-8.6 -18.7L-9.1 -20.9M10.8 2L13.3 1.6L15.7 2.7L18.2 1.9L20.8 3.1L23.4 2.5M-11.2 -8.2L-13.2 -7L-15.3 -7.5L-17.7 -7.6L-19.5 -8.8M11.5 7.8L13.3 10.4L14.1 12.8L16.1 14.2M-6.9 2.8L-6.5 5.3L-7.8 7.3L-9.2 10L-11.3 12.1" stroke="#5a9a28"/><path d="M-0.5 0.9L-9.3 -4.2L-17.8 -6.3L-22.1 -11L-21.6 -11.4L-17.4 -7.1L-8.8 -5.4L0.5 -0.9ZM-0.9 -0.1L0.1 -4.8L0.1 -9L-1.4 -14.2L-3.9 -17.7L-3.5 -18L-0.8 -14.5L1 -9.1L1.4 -4.8L0.9 0.1ZM0.1 -9.2L1.5 -12.5L1.1 -15.4L1.6 -15.5L2.1 -12.4L0.9 -8.9ZM-0.4 -0.9L6.7 -3.3L11 -5.5L18.6 -7.1L29.2 -10.4L29.4 -9.9L18.8 -6.4L11.4 -4.5L7.2 -2.1L0.4 0.9ZM0.6 0.9L-5.4 4.3L-8.6 7.3L-11.8 13.5L-14.1 19.9L-19.5 28.4L-19.9 28.1L-14.7 19.6L-12.7 13.2L-9.5 6.6L-6.3 3.1L-0.6 -0.9ZM0.9 0.2L-0.5 5.8L2.8 13.3L1.8 21.9L1.4 21.8L2.1 13.4L-1.6 6L-0.9 -0.2ZM0.4 -0.7L6 2.7L14.3 2.5L18.6 0.8L18.8 1.3L14.5 3.2L5.8 3.7L-0.4 0.7ZM-9.1 7.4L-15.4 7.2L-18.5 9.3L-18.8 8.9L-15.5 6.6L-9.1 6.5ZM-4.6 -1L-2.2 -2.6L0.6 -3L3 -2.2L5.4 -0.3L5.6 2L3 3.4L0.4 3.2L-2.4 3L-4.4 1.4Z" fill="#62a42c" stroke="#62a42c" stroke-width="0.500"/></g>
<path d="M519.2 224.5L520.6 225.6L520.4 226.7L519.9 227.7L519.1 228.7L520.3 230L520.1 231.1L519 231.9L518.6 232.9L517.6 233.7L516.6 234.4L517 235.7L517 236.9L515.3 237.2L516.4 239L514.6 239.1L514 240L513 240.5L514.4 242.8L513.2 243.3L512.8 244.4L511.6 244.7L509.8 244.4L509.6 245.7L509.2 246.8L507.8 246.7L508.2 249.2L506.5 248.6L505.4 248.7L505.3 250.8L503.5 249.7L503.5 252L502 251.3L501 251.9L499.8 251.7L498.9 252.3L497.7 251.8L496.6 251.6L495.9 253.8L494.6 252.3L493.7 253.7L492.5 252.2L491.5 254.2L490.5 254L489.4 253.5L488.3 253.5L487.3 252.9L486.2 253.1L485.4 251.4L484.2 252.2L482.9 252.8L482.4 251L480.7 252.5L479.7 252.1L479.2 250.6L478.2 250.1L477.2 249.9L476.3 249.2L474.5 250L474.5 248.1L474.2 246.7L473.3 246.2L471.5 246.8L470.2 246.5L470.4 244.8L469.7 243.9L468.9 243.2L467.9 242.6L468.4 240.9L467.1 240.6L466.6 239.6L466 238.7L466.5 237.3L466.1 236.3L465.3 235.6L463.5 235.2L464.5 233.7L463.5 232.9L463.9 231.7L464.1 230.6L463.9 229.6L461.7 228.9L461.6 227.8L462.5 226.6L461.5 225.6L461.5 224.5L460.9 223.4L460.8 222.3L462.3 221.3L461 220L461.2 218.9L462.5 218.1L462 216.8L463.4 216.1L464.1 215.2L464.8 214.4L463.8 212.8L466 212.6L466.7 211.8L465.6 210L466.2 209.2L467.4 208.7L467.3 207.3L469.6 207.7L469.8 206.5L470.3 205.7L470.8 204.6L471.9 204.3L472.8 203.8L473.1 202.5L473 200.6L473.7 199.8L474.9 199.6L476.2 199.6L477.4 199.5L477.5 197.4L479 197.9L479.8 197L481.4 198.3L482.3 197.6L482.8 195.8L483.9 195.7L485 195.3L486.2 195.9L487.3 196.2L488.3 195.8L489.4 195.1L490.5 196.5L491.5 196L492.5 196.7L493.7 195.5L494.5 197.6L495.8 196L497 195.4L497.5 198L498.9 196.8L500 196.9L501.2 196.6L502 197.6L502.7 198.7L503.8 198.8L505.5 198L506.4 198.6L506.3 200.8L507.1 201.5L507.9 202.1L508.6 202.9L510.1 202.8L510.3 204.1L512.3 203.6L512.6 204.8L512.2 206.5L513.7 206.7L513.8 207.9L514.7 208.6L514.6 209.9L515 210.9L515.5 211.7L516.4 212.4L517.6 213L517.6 214.2L516.8 215.6L518.8 216L519.6 216.9L519.6 218L520 219.1L518.2 220.4L519.6 221.3L518.7 222.4L520.7 223.4Z" fill="none" stroke="#508c22" stroke-width="0.9"/><path d="M512 211.4L512.5 213.4L512.9 216.3M516.5 220.5L517 222L514.2 224.1M509.1 240.9L511.3 243.6L510.2 246.6M461.4 218.6L463.5 219.6L462 222.4M464.5 218.5L462.7 220.9L461.6 221.4M513.8 230.9L514.5 232.2L515.6 234.5M517.7 215L517.6 217.5L516.4 219.9M516.9 235L517 237.1L515.9 237.9M491.9 249L491.3 251.8L487.8 252.1M468.8 215.2L467.6 217.5L464.2 215.9M504.1 203.3L506.2 203.4L506.7 206.3M516.3 221.3L519.3 222.5L519.4 224.2M514.4 213L517.1 214.5L516.1 217.6M512.6 217.5L515 218.6L515.2 221.7M517.7 225.8L516.4 227.2L514.8 228.8M512.2 227.7L516 229L517.3 230.6M470.5 231.5L468.5 232.6L466.5 233.9M470.2 238.8L470.7 242.2L470.2 244.4M494.7 246.3L495.3 247.4L494.3 249.6M494.6 252.1L497.8 251.4L499.6 254.5M488 251.8L490.4 252.3L490.8 253.6M508.7 243.3L509.7 244.4L509.9 246.9M507.1 240.7L507.4 241.7L505.9 243.4M482.2 246.4L480.3 247.9L478.4 249.5M489.4 248L487.7 249.2L484.9 250.2M482.1 245.8L480.5 248.4L478.9 248.8M465.3 216.3L463.1 219.4L460.7 219.4M488.5 249.9L490.4 253.8L488.1 255.7M471.3 238.9L469.8 239.9L467 240.5M489.1 252.5L487.4 253.1L486 251.2M500.7 246.3L500.6 248L500.4 249.3M495.4 246.8L495.9 247.4L495 249.6M479.3 248.6L477.1 248.6L474.9 248.3M519.1 215.4L517.4 216.9L514.2 217.4M516.4 229.7L516.1 230.7L514.7 232.8M497.7 249.9L496.9 251.7L493.1 252.1M467 227.5L463.9 226.9L462.7 225.7M501.2 246.8L502.5 248.3L501.3 249.8M517.6 232.1L516.9 234.6L513.7 234.5M521.3 227.1L518 228.5L516.2 226.2M472.2 241.4L470.2 242.6L469 241.8M472.4 243.2L474.9 244.6L474.7 247.6M504.6 243.5L506.7 243.6L507.3 245.2M514.4 208.1L513.6 209.1L511.8 209.3M514.8 233.9L513.5 235.9L511.3 237.1M498.6 247.2L501 247.8L500.6 251.1M507.4 241.2L505.9 243.6L504.5 244.9M511.9 211.5L512.6 212.2L513.7 214.9M513.7 209.9L515.5 209.8L516.2 212.3M515.5 226.9L514.3 229L513 231.1M474.5 242.4L474.7 244.3L472.1 247.2M521 220.7L518.4 222L517.2 221.8M492.2 250.8L489.6 252.1L488.9 250.2M498.2 248.1L499.4 250L498.5 251.4M512.7 227.7L514.2 228.9L515.5 230.1M472.3 237.8L472.2 240.2L471.2 242.5M492.3 249.2L492.6 251.5L490.8 253.7M512.7 213.9L515.2 214.9L514.8 217.1M474 244.4L472.4 246.5L471 246.7M514.6 231.5L516.1 233.8L515.7 235.3M506.9 244.7L503.5 246.5L501.4 245.2M497.9 249.7L501 251.4L500 254.8M516.1 225.7L514.8 227.3L513.3 228.5M500.6 250L498.8 251.8L495.4 250M486.1 250.6L484.1 250.7L482 249.3M503.3 243.3L504.3 243.3L506 246.2M511 231.7L513.5 232.2L514.5 234.9M516.9 231L514.7 232.3L513.3 232.8M506.1 247.7L505 249.9L503.5 250.2M469.2 240L469 241.5L466.4 242.6M470.1 238.3L470.7 240.2L471.9 241.6M517.4 211.5L515.1 212.2L512 211.9M465.7 214.9L467 216.7L467.4 218.1M492.3 250.3L492.9 251.7L492.9 253.7M494.7 247.7L491.6 248.9L489 246.9M465.6 229.3L461.9 230.5L460.1 228.6M510.9 234L513.8 235.3L514.1 237.1M507.9 203.7L506 206.9L504.5 206.9M485.6 248.4L484.7 250.3L483 251.3M468.6 242.6L471.3 242.4L471.5 244.6M515.6 227.9L514.6 230.1L513.7 231.3M474.2 242.3L476.2 244.3L475.2 246M516.8 233.2L516.6 235.1L514.2 235.9M502.5 249.4L502.4 251.1L499.6 251.5M465.3 222.1L466.1 224.3L464.5 227.1M515 217.8L517 219.6L518.4 221M516.8 212.3L517.4 215.2L514.5 215.9M517.3 215.2L515.4 217.9L513.3 218.1M473.1 240.3L473.2 242.7L470.4 242.3M510.8 243.3L507.5 243.8L506.2 243M517.5 226.1L517.6 227L515.1 227.8M517.8 211.9L515.7 213.3L514.5 213M504.6 244.6L501.8 246.7L498.8 245M465.1 239.2L466.7 238.9L468.8 241.3M512.7 241.4L510.2 242L508.8 240.3M513.1 214.2L513.1 215.5L513.4 217.3M505.8 245.9L508.5 246.3L509.2 248.5M499.9 247.3L500.8 248.6L500.1 250.8M514.5 205.9L513.1 208.5L509.5 207.7M516 227.5L513.8 229.7L511.5 230.1M519.2 219.3L517 219.7L514.1 218.5M518.6 223.6L520 225.7L518.7 226.9M518.3 219.2L519.7 221.2L519.3 222.1M484.5 249.1L485.5 251.4L485.3 254.9M464.6 231.6L463.9 234.2L462.1 233.9M513.2 237.2L516.3 238.2L516.6 241.1M483.1 248.5L484.3 249.4L484.9 252.2M513 211.3L512.7 213.8L510 214.8M486.4 246.6L489 249.3L487.9 250.9M503.4 243.4L503.9 245.3L503.3 247.7M510.5 233L513.7 234.1L513.6 236.2M514 242L511.6 242.3L509 241.4M463.3 222.8L466 223.3L466.7 226.5M509.8 201.3L510.2 204.4L508 204.9M516.8 216.1L518.1 219.2L517.2 221.4M515.1 216.2L517.6 217.7L517.2 221.2M517.2 211L514 211.5L512.6 209.9M515.8 234.8L516.1 236.3L516.9 237.8M467.3 215.5L466.2 215.5L463.9 214.8M468.6 237.6L470.2 239.5L469.9 243.2M499 232.2L501.8 230.7M499.7 233L502.5 231.7M500.5 232.9L503.3 233.7M501.2 233L504 233.6M502 234.6L504.8 234.4M502.7 234.7L505.5 235.3M503.5 235.2L506.3 234.8M504.3 235.2L507.1 236.6M505 237.2L507.8 237.8M487.8 236L490.6 237.2M488.6 237.5L491.4 237.6M489.5 239.1L492.3 238.4M490.3 238.9L493.1 239.4M491.1 239L493.9 240.7M491.9 240.6L494.7 239.5M492.7 241.3L495.5 242.4M493.5 243.3L496.3 241.9M494.3 242.3L497.1 243.9M495.9 244.6L498.7 243.9M496.7 244.6L499.5 245.2M497.4 245.8L500.2 244.4M498.2 245.2L501 246.1M499 245.4L501.8 245M499.8 246.4L502.6 245.7M500.6 246.5L503.4 246M501.4 247L504.2 246.3M502.2 247.5L505 247.1M464.3 221.1L467.1 220.6M464.7 221L467.5 220.4M465.1 219.8L467.9 221.7M465.6 221.6L468.4 221.5M466 221.8L468.8 221.1M466.4 222.2L469.2 221M466.9 222.3L469.7 220.1M467.3 220.9L470.1 221.4M467.7 222.1L470.5 221.4" fill="none" stroke="#5c9e28" stroke-width="0.9" opacity="0.85"/>
<path d="M463.2 334.6L461 335.6L460.7 336.7L463.1 338L460.9 338.8L460.5 339.8L461.6 341.1L460.5 341.9L461.5 343.3L459.5 343.8L460.8 345.4L458.8 345.8L458.9 347L459.2 348.3L458 349L458 350.2L456.9 350.8L454.9 350.7L456 352.8L454.8 353.2L453.6 353.5L452.7 354.1L453.2 356.1L451.9 356.4L451.8 357.9L450.7 358.3L450.1 359.4L448.7 359.2L447.9 360.1L446.9 360.5L445.5 360.2L445.3 362.3L443.7 361.2L443.1 362.7L442.2 363.4L440.9 362.9L439.5 361.9L438.8 363.8L437.7 363.5L436.4 362.3L435.3 362L434.4 363.3L433.3 362L432.3 364.2L431.2 363.1L430.2 363L429.2 362.6L428 363.2L426.8 363.7L426.1 361.9L425 361.9L423.8 362.2L423.1 361.2L421.8 361.6L420.8 361.1L419.9 360.5L418.6 360.6L417.9 359.7L417.6 358.2L415.3 359.6L415.4 357.6L414.5 357.1L413.7 356.3L412 356.6L411.2 355.8L411.4 354.1L410.9 353.1L411 351.7L408.7 352.1L409.7 350.1L408.4 349.7L408.3 348.5L407.9 347.6L407.4 346.7L407.4 345.6L407.3 344.5L405.7 344L404.7 343.2L404.7 342L405.5 340.8L404 340L405.4 338.7L404.2 337.8L403 336.8L402.6 335.7L403.7 334.6L402.7 333.5L403.7 332.4L403.7 331.4L403.7 330.3L402.9 329L403.8 328.1L404.8 327.2L404.5 326L405.1 325L406.3 324.3L405.7 322.9L406.1 321.9L407.2 321.2L407 319.9L409.6 320.2L409.1 318.7L409.5 317.6L410.7 317.3L411.7 316.7L411.3 315L412.5 314.6L413.5 314.2L414.6 313.9L413.8 311.3L415.6 311.8L416.7 311.6L417.4 310.8L418.2 310.1L418.4 308.1L420.2 309.2L421 308.5L422.1 308.5L422.8 307.3L424 307.6L425 307L425.8 305.8L426.7 305.2L427.9 305.3L429.2 307.3L430.2 306.3L431.2 305.1L432.3 307.2L433.3 306.8L434.4 306.2L435.4 306.5L436.6 305.7L437.6 305.9L438.6 306.7L439.5 307.4L440.5 307.7L441.5 307.8L442.3 308.6L443.9 307.4L444.4 309L446.2 307.7L446.9 308.7L447.1 310.5L448.6 310.1L449.7 310.4L449.7 312.2L451.2 312L451.2 313.6L453.3 313L452.6 315.2L454.5 314.9L455.8 315.1L456.2 316.3L455.5 318.1L456.7 318.6L456.3 320L457.3 320.7L458.9 321L459.3 322L457.8 323.8L459.1 324.4L460.1 325.2L459.4 326.5L461.3 327.1L461.8 328.1L461.3 329.3L461 330.4L462.5 331.3L461.8 332.5L461.1 333.6Z" fill="none" stroke="#508c22" stroke-width="0.9"/><path d="M409.1 328.3L407.8 329.1L404.2 329.2M461 338.4L459.3 339.6L457.9 340.9M452.4 316.4L449.4 316.7L448.3 315.1M431.5 360.9L435.2 361.4L436.1 363.2M436.8 357.4L438.1 359.1L438.5 359.8M429.5 359.1L431.8 362.4L430.1 364.2M443.5 357.6L444.5 359.3L444.3 362.3M449.8 315.4L449.9 316.6L450.3 318.2M411 344.3L408.9 345.5L407.2 345M434.8 360L433.3 359.7L432 359.3M415.9 350.6L415 349.8L413.2 349.5M456.1 343.9L456.6 346.2L456.4 346.9M454.2 350.9L453.9 352.6L451.7 352.5M455 335.7L456.4 337L456.9 338M455.8 325.6L459.2 326L460.1 327.8M403.6 334.6L404.3 336L403.3 338.5M456.9 337.9L459.6 340.6L458.7 343M459.6 324L458.3 326.4L456.6 327.4M459.2 333.1L457.9 336L455.7 337.7M451.3 319.3L453.3 320.6L452.3 323.9M445.8 353.8L446.8 354.9L445.8 357M451.4 311.9L449.7 311.6L448.2 311.2M451.7 318L453.4 317.9L454.3 320M457 341.5L458.2 343.8L459 345.6M423 359.3L420.9 359.6L418.6 358.6M455.9 338.7L455.8 341.1L455.4 343.9M407.7 325.5L405.8 326.3L403.4 325.1M457.1 318.8L457 321.2L456.9 323M437 358.2L434.3 359.3L432.4 359.3M407.3 328L407 329.9L405.9 333.2M456.4 315.7L454.9 318.7L452.6 319.3M441.2 355L442.3 356.3L443.1 358.8M453.5 315.4L450.5 318.5L448.4 317.8M436.5 362.2L438.1 362L440.3 364.1M432.7 358.1L434.1 358.5L435.5 360.8M407.8 334.7L407.9 338.2L406 339.9M455.6 334.1L457.6 335.1L457.2 337.4M443.8 353.7L445.3 355L443.6 357.4M410.6 353.5L412.1 355.5L413.1 358.6M409.8 347.5L409.2 349.2L407.3 348.8M456.8 344.1L456.2 345.4L455.5 347M422.2 356.9L421.9 358.3L420.3 359.9M455.6 316.8L455.7 318.5L453.5 321.3M458 331L459.1 331.8L457.5 334.1M454.1 316.4L456.2 317.1L455.7 320.1M459.3 329L460.4 331.3L460.1 334.4M453.6 316.5L454.8 319.3L455.4 322M428.9 357.9L427.3 359.8L424.1 359.6M422.7 357.6L424.6 358.9L425.9 360.2M457.3 344.9L458 346.3L457.5 347.9M449.2 356.1L447.9 359.1L445.5 358.6M453.3 350.7L451.4 353L449.5 352.1M443.6 357.1L443.7 359.7L443.7 361.7M443.9 359L442.6 360.1L441.5 360.7M432.7 359.9L433.4 360.2L434.3 362.3M424.4 355.7L422.1 356L419.5 354.2M453.3 319.7L453.9 320.9L452 322.4M437.1 362.2L435.5 364L432 362.4M455.3 322.7L457.5 324L457.5 327.2M457.2 320.9L457.7 322.8L457.4 325.4M456.6 337.8L458 339.6L457.4 341.2M450.5 353.1L451.1 355.3L450.2 356.3M407.6 343.2L407.6 345.1L406.5 348.3M455 343.6L454.4 345.3L452.1 347M413.7 353.3L412.1 353.6L409.8 351.9M457.8 342L460.5 343.3L460.2 345M458.8 336.1L456.8 338.1L454.4 337.3M445.7 356.9L443.1 359.7L440.6 359.7M453.2 355.6L449.5 355.8L447.8 353.8M450.1 314.8L449.2 316.2L447.3 317.7M407.2 343.5L407.8 345.6L406.4 347.1M439.5 360.8L438.8 363L438.4 363.9M455.8 339L458.9 339.1L460.4 341.5M419.7 356.8L420 359.8L419 360.6M451.4 352.4L451.4 355.4L450.1 357.7M434.3 358.7L431.1 361.1L429 360.7M410.6 347.5L409.6 349.4L408.6 351.4M432.4 358.9L433.8 360.8L433.7 363.3M435.6 357.5L434.7 359.3L431.5 359.1M453.8 354.9L451.8 354.3L448.6 353M446 356.5L445.2 357L442.9 356.1M407 323.8L407.6 325L405.1 326.4M459 335.9L457.8 337.9L456.7 338.1M455.8 343.6L459 345.5L459.3 347.8M416.4 358.4L419 358.8L421.2 361.7M450.9 313.7L454.2 315.8L454 318.1M460 318.6L458.5 320.8L454.9 320.7M447 312.8L449.4 314.4L449.3 315.2M407.3 333L408 335.1L405.7 338.3M408.4 346L409.8 346.6L409.9 349.5M411 328.3L407.3 330L405.2 327.8M425.2 357.1L424.8 360.2L423.4 361.7M457.1 325.9L454.6 326.4L453.3 326.6M454.9 337.8L456.7 339.3L456.4 340.4M440.4 361.3L439.1 363.8L437.3 363.1M461.6 341L458.9 343.4L456.1 342.9M440.8 356.7L438.3 358.1L436.2 359M450.7 348.9L453.2 350.1L453.8 352.5M434.2 357.5L436.5 358.8L437.3 360.7M409.5 340.4L409.6 343.3L407.9 344.4M458.4 330.4L457 332.7L455.9 332.7M410.1 330.5L408.1 332.7L407.2 332.9M455.9 349.8L452.9 349.1L450.8 348M456.6 332.6L457 334.9L454.5 336.8M409.1 345.9L410.8 347.4L411.2 349.9M417.1 349.7L414.1 352L412.3 351.2M435.8 360.8L432.5 361.9L430.7 359.9M454.4 313.1L454.1 315.6L452.1 317.3M449.8 312.6L451.7 313.5L452.5 314.2M407.5 337.5L406 339.1L404.1 338.1M461.3 325.9L459.8 327.5L456.4 326.3M447.7 310.5L448.4 313.1L448.6 315.7M452.7 324.6L455.9 325.7L457.6 327.2M408.5 342.4L406.7 342.9L403.8 341.9M454 317L454.9 319.1L452.8 322.2M444.3 358.3L442.2 360.4L440.1 361.4M460.3 328.7L460.1 331.6L457.2 331.2M450.1 311.3L449.4 312.5L446.4 313.1M413.1 345.9L411 346.7L407.8 345.3M444.3 356.7L446.4 358.1L445.3 359.7M440.8 340.6L443.6 341.2M441.6 341.4L444.4 341.3M442.3 342.7L445.1 342.5M443.1 342.5L445.9 343.7M443.8 345.4L446.6 344.3M444.6 344.8L447.4 344.8M445.3 345.2L448.2 345.4M446.1 345.8L448.9 346.3M446.9 348.2L449.7 346.9M429.6 347.9L432.4 347M430.4 348.1L433.2 347.7M431.3 348.2L434.1 349.4M432.1 349.5L434.9 348.5M432.9 349.5L435.7 349.7M433.7 350.9L436.5 350.5M434.5 350.9L437.3 351M435.3 353.5L438.1 352.8M436.1 353.9L438.9 354M437.7 354.4L440.5 355.4M438.5 356L441.3 355.4M439.3 355.7L442.1 355.9M440.1 356.1L442.9 355M440.9 354.8L443.7 355.4M441.7 355L444.5 355.6M442.5 355.1L445.3 355.3M443.3 356.8L446.1 355.7M444.1 357.1L446.9 356.4M406 331.5L408.8 330.8M406.4 331.7L409.2 330.6M406.8 330.7L409.7 331.9M407.3 331.4L410.1 330.8M407.7 331.9L410.5 331.6M408.2 331.5L411 330M408.6 332.2L411.4 330.3M409 330.1L411.8 330.9M409.5 330.7L412.3 330.8" fill="none" stroke="#5c9e28" stroke-width="0.9" opacity="0.85"/>
<path d="M571.9 397.8L571.9 398.6L571.8 399.3L570.3 399.9L571.1 400.8L570.6 401.4L570.6 402.2L569.7 402.7L569.6 403.4L569.8 404.2L569.1 404.7L569.2 405.5L568.1 405.8L567.9 406.5L568.5 407.6L567.6 408L567.4 408.7L567.3 409.5L566.3 409.7L565.5 409.9L566 411.3L565.3 411.6L564.9 412.2L564.3 412.7L564.2 413.7L563 413.4L562.8 414.4L561.8 414.3L561.4 415L560.9 415.5L559.9 415.3L559.1 415.3L558.7 416.2L558.2 416.9L557.4 416.9L556.6 416.8L556 417.3L555.1 416.6L554.4 416.7L553.7 417L553.1 417.9L552.3 416.8L551.5 416.6L550.9 416.6L550.2 416.4L549.4 416.8L548.7 417.2L547.9 417.6L547.3 416.6L546.6 416.6L545.9 416.3L545.2 416.1L544.3 416.7L543.7 416.2L543.2 415.4L542.7 414.9L541.4 415.7L540.8 415.2L540.1 415L540 413.8L539.1 413.8L538.1 413.8L538 412.9L537 412.8L537.5 411.3L536 411.7L536.8 410L535.9 409.8L536 408.8L534.5 409L534.3 408.3L533.5 407.9L533.5 407L532.9 406.5L533.3 405.5L532.2 405.1L532.4 404.3L532.8 403.4L531.5 403L532.3 402.1L532.4 401.3L532.4 400.6L531.6 400L532 399.2L530.6 398.6L530.5 397.8L531.8 397.1L532 396.4L531.3 395.6L532.1 395L531.6 394.1L531.3 393.3L532.5 392.8L532.4 392.1L531.9 391.1L532.9 390.7L533.4 390.2L532.9 389.1L533.4 388.5L533.6 387.8L534.4 387.4L535.2 387L535.2 386.2L535.4 385.4L536.1 385.1L537.1 385L537.5 384.4L537.8 383.7L537.9 382.7L538.7 382.4L539.2 382L539.5 381.1L540.8 381.7L540.9 380.5L541.8 380.6L542.3 379.9L542.7 379.1L543.8 379.8L544.1 378.3L545.3 379.6L545.7 378.6L546.5 378.5L547.3 378.9L547.9 378.3L548.7 378.4L549.4 378.4L550.1 377.9L550.9 379.2L551.6 378.5L552.3 377.9L552.9 379.1L553.8 377.9L554.3 379.1L555.2 378.4L555.7 379.4L556.5 379.1L557.2 379.3L557.7 380L558.8 379.2L559.3 379.8L560.2 379.7L560.7 380.3L561.4 380.6L562 381L562.4 381.8L563.6 381.3L563.3 382.9L564.8 382.3L565.3 382.9L565.3 383.9L566.2 384.2L566.5 384.9L566.8 385.5L566.8 386.5L567.2 387.1L567.6 387.7L567.8 388.3L569.2 388.4L568.5 389.6L568.9 390.2L569.2 390.8L570.2 391.3L569.8 392.1L570.2 392.8L569.9 393.6L570.1 394.3L570 395L570.4 395.7L570.5 396.4L571.7 397Z" fill="none" stroke="#508c22" stroke-width="0.9"/><path d="M536 403.4L536.8 404.8L535.3 406.5M535.3 389.5L534.1 389.9L533.3 389.9M564.8 387.6L565.7 389.1L564.5 391.1M566.3 385.4L565.6 385L564.1 384.7M561.4 382.9L561.9 384.9L560.4 386.2M556.2 413.7L556.5 414.6L556.6 416.9M536.3 404.6L536.6 406.3L534.8 407.4M568.8 397.6L570.5 400L569.6 401.4M533.5 408.2L535.3 408.7L536.7 410M555.7 413.4L556.9 413.5L558 414.9M553.6 414.1L554.5 415.1L554 416.5M567.8 387.6L567.8 389.7L565.9 391.1M564.8 410L564.6 412.2L564.2 413.2M567 399.5L568 400.8L566.9 401.5M559.8 411.7L558.8 413L558.3 413.4M565.5 404.9L565.2 406.2L564.9 406.8M570.2 394.8L569.6 396.3L568.7 397.6M546.9 412.8L547.1 414.1L545.4 415.3M531.2 395L533.3 396.6L533.7 397.9M533.5 390.9L532 391L531.4 391.2M556.2 415L555.8 416.9L554.8 418M546.2 415.3L545.7 415.6L544.1 416.3M539 409.6L541.3 409.7L541.2 412M556.4 414.6L555.3 415.1L553.4 415.3M557.3 415L555.6 416L554.3 414.7M566.7 384.7L564.8 386L563.5 385.1M542.1 411.2L541.3 413.2L539.4 414.1M556.7 415.1L555.5 416L553.6 414.5M571.8 393.9L570.6 393.6L568.5 393M567.7 405.8L566.4 405.3L564.9 404.8M568.6 392.4L570.1 392.8L570.4 394.6M565.7 381.7L563.9 383.2L562.5 383.1M563.8 411.1L562.4 411.7L561.8 410.7M567.1 403L567.4 404.5L566.8 405.1M566.8 400.3L568.9 401.9L568.8 403.1M561.5 382.5L563.6 383.5L564 384.8M566.1 411.9L563.9 412.1L562.9 411.4M568.5 406.6L568 408.8L566.2 408.9M568.5 400L568.7 400.6L568.8 402.7M566.9 396.5L568.2 398.3L567.1 399.4M561.6 410.6L560.9 412.4L560.2 412.2M568.1 401.2L567.9 401.9L566.6 402.6M551.1 416.2L548.5 416.6L547.4 414.8M558.3 412.3L558.4 413.2L556.4 414.6M569 399.8L569.6 399.5L570.7 401M568.5 401.8L567.7 402.9L566.8 403.1M559.9 414.4L558.7 415.8L556.7 414.6M559.6 413.2L558.4 414.9L556.2 414.2M554.3 414.9L554.7 416.6L553.6 416.8M553.9 412.9L552.5 414.1L551 415.3M552.1 412.3L551.9 414.8L549.6 415.4M567.2 392.4L568 393.6L566.6 395.6M567.8 391.9L566.8 391.6L565.1 391.1M537.7 410.7L538.2 411L539 412.8M564.9 390.4L566.5 390.7L566.4 393.1M566.6 398.3L567.3 399.7L567 401M562.3 385.7L563.5 386L564.7 388.3M542.5 409.7L542.4 411.7L540.8 413M543.9 413.8L544 415.3L543.1 415.6M559.6 383.6L561.6 384.4L562.3 385.1M568.6 407.8L566.9 408.3L564.9 408.4M557.3 415.8L556.1 415.6L554.9 415M539.1 411.8L538 412.3L537.1 411.8M560.1 411.1L559.7 412.1L559.2 413M535 401L534.9 402.7L534.9 403.5M532.7 395.3L534.9 396.2L535.6 397.2M534.3 408.8L536.5 410L536.5 411.5M545.9 414L547.3 414.2L549 415.6M537.4 406.3L536.9 408.7L535 409.4M568.2 388.2L568.6 389.6L567.4 391.8M568.6 402.8L569.9 405.1L569 406.6M545.4 414.6L547.5 414.7L548.8 416.3M550.1 414.6L551.6 415.1L552 415.7M534.3 401.2L534.8 402.9L534.6 404.2M567 392.5L568.6 393.1L569.5 395.5M571.1 395.8L570.2 396.9L569.1 396.9M565.6 403.9L566.5 405.7L565.3 407.1M566.7 401L567.9 400.8L568 402.3M537.3 409.1L538.2 410.5L537 411M568.3 399L569 401L568.6 402.6M556.1 412.2L556.6 413L556.6 415M538.9 405.8L537.6 408.1L536.5 408.2M543.4 415.8L545 415.6L546.5 417.4M563.8 382.6L562.4 383.3L561.3 383.6M535.4 393.4L533.9 394L531.9 393.4M533.8 406.1L535 408.1L534 409.5M561 413.6L559.5 415.1L557.7 414M534 400.6L535.6 401.9L534.5 403.8M554.6 413.5L555.7 414.6L555.9 416.4M559.2 410.8L559.2 412.5L557.8 413.7M551.6 414.8L552 416.6L551.4 417.8M540.1 409.3L540.4 410.2L540.2 411.3M535.9 404.4L536.3 405.2L535 406.7M562.4 380.9L563.7 382.7L562.4 384.1M554.9 413.1L553.8 414.4L552.7 413.7M566 384.5L564.8 385.2L563.3 384.9M565.1 390.5L565.7 390.6L567.1 392.1M562.9 384L562.7 384.7L562.4 385.8M566.9 406.7L564.4 407.2L563.2 405.6M534.8 402L534.4 402.9L534.2 404.4M545.2 412.6L546.8 414.2L545.8 416.6M550.3 416L550.5 417.5L550.1 418.2M535.8 406.1L536.3 406.2L537.2 407.5M568.1 401.2L568.8 402.8L568.5 404.7M537.2 410.4L536.9 411.8L536.4 412.2M562.3 383.1L564.3 383.1L564.2 385.3M548.1 415.2L549 417L548.1 418.9M566 409.1L565.1 409.9L564.6 411.2M552.6 413.7L550.7 415.4L549 415.5M568.1 404.7L566.9 405L565.7 404.1M559.9 410.2L559.5 411.9L558.7 413.6M546.1 414.9L545.3 416.7L543.9 416.9M566.1 408.3L568.2 408L568.7 409.8M567.6 393.7L568 395.4L567 396.5M539.9 408.7L540.6 409.5L539.2 411.2M532.5 395.3L531.3 397.2L530.1 398.6M568 403.1L569.5 403.7L571.2 405.2M567.3 390L568.6 391.2L567.5 393M537.2 409L538.7 409.6L540.2 410.5M553.8 414.8L553.1 416.9L551.1 417.1M556.7 402.2L558.6 402.3M557.2 402.6L559.1 402.6M557.7 403.5L559.6 403.6M558.2 403.5L560.1 403.3M558.7 403.7L560.6 404M559.2 404.4L561.2 405.1M559.8 405.9L561.7 405.5M560.3 406.1L562.2 405.8M560.8 405.7L562.7 406.8M549 406.7L551 405.7M549.6 406.4L551.5 407.1M550.1 407.6L552.1 406.7M550.7 407.6L552.6 407.6M551.3 408.4L553.2 408.8M551.8 408.2L553.7 408.6M552.4 410L554.3 408.8M552.9 409.3L554.8 410.3M553.5 410.6L555.4 410.3M554.5 411.8L556.4 411.2M555.1 412.2L557 411.6M555.6 412L557.5 412.8M556.2 412.2L558.1 412.1M556.7 412.1L558.6 412M557.2 412.6L559.2 412.8M557.8 411.9L559.7 411.8M558.3 412.5L560.3 412.1M558.9 412.9L560.8 412.2M532.9 395.1L534.8 395.1M533.2 396L535.1 394.9M533.5 394.9L535.4 395M533.8 395.6L535.7 394.9M534.1 395L536 395.7M534.4 395.5L536.3 394.7M534.7 396.1L536.6 394.9M535 395.2L536.9 395.6M535.3 395.5L537.2 396.1" fill="none" stroke="#5c9e28" stroke-width="0.9" opacity="0.85"/>
<path d="M367.7 295.6L367.9 297.1L366.9 298.5L366.5 299.9L366.2 301.5L365 302.5L363.6 303.1L362.4 304L361.2 305L359.6 305L358.1 304.8L356.5 305.4L355.2 304.4L353.7 304.3L352.4 303.4L351.3 302.4L350 301.5L349.8 299.8L348.9 298.6L348.9 297.1L348.1 295.6L348.9 294.1L349 292.6L349.3 291.1L350.1 289.8L351.5 289L352.3 287.6L353.6 286.8L355.2 286.6L356.6 285.9L358.1 286.2L359.6 286.4L361 286.7L362.4 287.2L363.9 287.6L364.9 288.8L366.2 289.7L366.9 291.1L367 292.7L367.5 294.1Z" fill="none" stroke="#5a9a28" stroke-width="1"/><path d="M357.3 295.9L362.1 297L365.5 294.5L361.5 293.2ZM357.3 295.9L359.4 300.4L363.4 301.5L362 297.6ZM357.3 295.9L357 300.9L360.1 303.8L360.6 299.6ZM357.3 295.9L353.7 299.8L354.1 304.3L357.3 301.2ZM357.3 295.9L353 295.5L350.8 298.4L354.4 299.1ZM357.3 295.9L353.9 291.6L349.4 291.1L351.9 294.9ZM357.3 295.9L356.1 290.6L352.2 288.2L352.9 292.8ZM357.3 295.9L359.6 291.6L358 287.8L355.8 291.3ZM357.3 295.9L362.3 294.4L364.2 290.4L359.9 291.4Z" fill="#5a9a28" fill-opacity="0.45" stroke="#5fa02a" stroke-width="0.8"/>
<path d="M396.9 292.4L396.7 293.9L396.3 295.3L396.2 296.9L395.2 298.1L394.3 299.3L393.1 300.2L391.7 300.9L390.4 301.7L388.9 301.9L387.4 302.2L385.9 302L384.3 301.8L383.1 300.9L381.9 299.9L380.8 299L379.5 298.1L379.1 296.6L378.2 295.4L377.8 293.9L378.2 292.4L377.7 290.9L378.6 289.5L378.6 287.9L379.4 286.6L380.8 285.8L381.7 284.5L383 283.7L384.5 283.6L385.9 282.8L387.4 283.1L389 282.6L390.4 283.1L391.9 283.5L392.8 284.9L394.1 285.7L395.2 286.7L396 288L396.3 289.5L397.2 290.8Z" fill="none" stroke="#5a9a28" stroke-width="1"/><path d="M386.6 292.7L390.4 295.2L394.1 293.7L391 291.4ZM386.6 292.7L389.6 296.8L393.8 297.2L391.6 293.5ZM386.6 292.7L385.7 297.7L388.4 301L389.5 296.9ZM386.6 292.7L382.8 295.5L382.7 299.4L386.1 297.4ZM386.6 292.7L382.3 293.1L380.5 296.3L384.2 296.3ZM386.6 292.7L382.7 289.3L378.4 289.9L381.5 293ZM386.6 292.7L385.7 287.6L382 285.3L382.4 289.6ZM386.6 292.7L389.4 288.2L388.3 283.8L385.7 287.4ZM386.6 292.7L391.1 291.8L392.7 288.2L388.8 288.7Z" fill="#5a9a28" fill-opacity="0.45" stroke="#5fa02a" stroke-width="0.8"/>
<path d="M424.7 281.6L424.1 283L424 284.5L423.4 285.9L422.9 287.4L421.9 288.5L420.8 289.6L419.2 289.9L417.9 290.7L416.4 290.7L415 291L413.5 291.1L412.2 290.4L410.8 289.9L409.3 289.5L408.2 288.4L407.4 287.1L406.4 286L405.6 284.6L405.9 283L405.2 281.6L405.4 280.1L406 278.7L406.7 277.4L406.9 275.7L408.3 274.9L409.5 274.1L410.8 273.3L411.9 272.2L413.5 272L415 271.8L416.5 271.9L418 272.4L419.5 272.7L420.6 273.9L421.8 274.8L423 275.8L423.6 277.2L424.4 278.5L424.5 280.1Z" fill="none" stroke="#5a9a28" stroke-width="1"/><path d="M414.2 281.9L417.8 284.1L421 282.5L418.1 280.3ZM414.2 281.9L416.6 285.8L420.4 286.1L418.7 282.6ZM414.2 281.9L413.7 286.4L416.7 288.8L417.4 285.1ZM414.2 281.9L410.9 285.1L411.5 288.9L414.5 286.4ZM414.2 281.9L409.6 281.3L406.8 284.1L410.7 285ZM414.2 281.9L410.9 278.9L407.2 279.8L409.8 282.6ZM414.2 281.9L412.8 276.6L408.9 274.4L409.7 278.9ZM414.2 281.9L417.1 277.9L416.1 273.8L413.4 277ZM414.2 281.9L418.8 279.7L420.1 275.5L416 277.1Z" fill="#5a9a28" fill-opacity="0.45" stroke="#5fa02a" stroke-width="0.8"/>
<path d="M555 260.6L555.4 262.1L554.7 263.5L554.3 264.9L553.7 266.3L552.8 267.6L551.4 268.3L550.2 269.2L548.6 269.4L547.3 270L545.8 270.1L544.3 270.4L542.8 269.8L541.3 269.3L540.2 268.3L539.2 267.2L537.8 266.4L537 265.1L536.8 263.5L536.6 262.1L536.2 260.6L536.3 259.1L536.5 257.6L537.2 256.2L538 255L539 253.8L540.2 252.9L541.6 252.4L542.9 251.8L544.2 250.8L545.8 250.7L547.3 251.3L548.9 251.2L550.2 252L551.3 253.1L552.8 253.6L553.6 254.9L554.7 256.1L555.1 257.6L555 259.1Z" fill="none" stroke="#5a9a28" stroke-width="1"/><path d="M545 260.9L549.8 263.1L553.8 261.3L549.9 259.2ZM545 260.9L546.3 265.3L550 266.7L549.2 262.8ZM545 260.9L543.9 265.9L546.4 269.4L547.7 265.3ZM545 260.9L541.3 264.7L541.6 269.2L544.9 266.2ZM545 260.9L540.9 259.9L538.3 262.5L541.8 263.7ZM545 260.9L541.8 257.5L537.9 258L540.4 261.1ZM545 260.9L543.8 256.1L540 254.3L540.7 258.4ZM545 260.9L548.4 257.4L547.9 253.2L544.8 256ZM545 260.9L549.4 258.8L550.3 254.8L546.5 256.3Z" fill="#5a9a28" fill-opacity="0.45" stroke="#5fa02a" stroke-width="0.8"/>
<path d="M547.3 287.8L547.3 289.3L547.2 290.9L546.1 292L545.4 293.3L544.3 294.3L543.3 295.3L542 296L540.7 296.7L539.3 297.3L537.8 297.8L536.3 297.4L534.9 296.8L533.5 296.3L532.1 295.7L531.1 294.5L530.3 293.2L529 292.3L528.6 290.8L528.6 289.3L528.5 287.8L528.6 286.3L528.3 284.7L529.5 283.6L530 282.1L530.7 280.7L532.4 280.3L533.5 279.3L534.8 278.7L536.2 278L537.8 278.4L539.3 278.5L540.7 278.9L542 279.6L543.5 279.9L544.8 280.8L545.5 282.2L546 283.6L547.1 284.8L547.5 286.3Z" fill="none" stroke="#5a9a28" stroke-width="1"/><path d="M537 288.1L541.1 290.3L544.6 288.6L541.3 286.4ZM537 288.1L538.7 292.8L542.7 294.3L541.5 290.2ZM537 288.1L535.7 292.8L538.1 296.2L539.5 292.3ZM537 288.1L533.5 291.3L533.8 295.4L537 292.9ZM537 288.1L532 287.3L528.7 290.1L532.9 291ZM537 288.1L532.8 284.9L528.4 285.6L531.8 288.6ZM537 288.1L537.4 283.9L534.4 281.8L533.8 285.3ZM537 288.1L539.1 284.1L537.3 280.8L535.2 284ZM537 288.1L541.5 285.6L542.5 281.3L538.5 283.2Z" fill="#5a9a28" fill-opacity="0.45" stroke="#5fa02a" stroke-width="0.8"/>
<path d="M541.6 319L541.7 320.5L541 321.9L540.6 323.3L539.7 324.4L538.7 325.5L537.7 326.6L536.4 327.3L535.1 328L533.7 328.7L532.2 328.2L530.7 328.6L529.3 327.9L527.7 327.8L526.4 326.9L525.6 325.6L524.2 324.8L523.5 323.4L523.4 321.9L522.8 320.5L522.4 319L522.4 317.4L523.3 316.1L523.8 314.7L524.3 313.2L525.2 312L526.7 311.5L528 310.7L529.2 309.7L530.7 309.7L532.2 309.5L533.7 309.2L535.2 309.7L536.6 310.3L538 311L539.1 312.1L540.2 313.2L540.9 314.6L541.4 316L541.3 317.6Z" fill="none" stroke="#5a9a28" stroke-width="1"/><path d="M531.4 319.3L536.1 322L540.4 320.8L536.7 318.2ZM531.4 319.3L534 323.6L538.1 324.3L536.3 320.5ZM531.4 319.3L531.2 324.1L534.3 326.8L534.8 322.7ZM531.4 319.3L527.5 321.7L527.3 325.6L530.8 323.8ZM531.4 319.3L526.1 319.4L523.1 322.7L527.5 322.9ZM531.4 319.3L527.5 316.5L523.6 317.7L526.7 320.3ZM531.4 319.3L530.2 314.8L526.5 313.3L527.2 317.2ZM531.4 319.3L534.7 315.6L534.1 311.4L531.1 314.3ZM531.4 319.3L536 316.7L537.1 312.3L533 314.2Z" fill="#5a9a28" fill-opacity="0.45" stroke="#5fa02a" stroke-width="0.8"/>
<path d="M547.7 351.4L547.2 352.9L547 354.4L546.6 355.9L545.4 356.9L544.6 358.2L543.5 359.2L542.3 360.3L540.7 360.2L539.2 360.5L537.8 360.9L536.3 361.1L534.7 360.8L533.6 359.7L532 359.4L531 358.2L529.7 357.3L528.9 355.9L529 354.3L527.9 353L528.2 351.4L528.6 349.9L528.7 348.4L529.5 347.2L529.9 345.6L531 344.6L532.3 343.9L533.5 343L534.8 342.3L536.3 341.7L537.8 342L539.3 342.2L540.7 342.4L542 343.2L543.4 343.7L544.8 344.4L545.4 345.9L546.2 347.1L547.1 348.4L547 349.9Z" fill="none" stroke="#5a9a28" stroke-width="1"/><path d="M537 351.7L541.3 353L544.3 350.6L540.7 349.2ZM537 351.7L539.2 356.3L543.4 357.5L541.8 353.5ZM537 351.7L535.5 355.7L537.7 358.6L539.3 355.3ZM537 351.7L533.6 354.4L534 358.1L537.1 356ZM537 351.7L532.4 351.2L529.7 354.2L533.6 354.9ZM537 351.7L533.7 348L529.6 348.1L532.1 351.5ZM537 351.7L536.8 347.3L533.6 345.4L533.4 349.1ZM537 351.7L539.6 348.3L538.3 344.9L535.8 347.6ZM537 351.7L541.7 349.2L542.9 344.9L538.8 346.7Z" fill="#5a9a28" fill-opacity="0.45" stroke="#5fa02a" stroke-width="0.8"/>
<path d="M443 388.5L442.9 390L442.6 391.5L441.9 392.8L441.3 394.1L440.2 395.2L438.9 396L437.8 397L436.3 397.3L435 397.7L433.5 397.9L431.9 398.3L430.5 397.6L429.1 397.1L427.7 396.5L426.5 395.5L425.7 394.2L425.1 392.8L424.4 391.5L424.1 390L423.5 388.5L424.4 387.1L424.5 385.6L424.8 384.1L425.7 382.8L426.7 381.7L427.7 380.6L429.2 380.1L430.4 379.1L431.9 378.7L433.5 379.3L435 379.1L436.4 379.5L437.8 380L439.2 380.7L440.1 381.9L441.4 382.8L442.3 384L443 385.4L443.3 387Z" fill="none" stroke="#5a9a28" stroke-width="1"/><path d="M432.7 388.8L437.7 390.2L441.4 387.8L437.2 386.4ZM432.7 388.8L434.5 393.4L438.5 394.8L437.3 390.8ZM432.7 388.8L431.2 393.1L433.5 396.2L435 392.7ZM432.7 388.8L428.8 390.9L428.3 394.7L431.9 393.2ZM432.7 388.8L428.2 388.3L425.7 391.2L429.5 391.9ZM432.7 388.8L429.9 385.7L426.3 386.4L428.5 389.3ZM432.7 388.8L431.6 383.7L427.7 381.5L428.4 385.9ZM432.7 388.8L435 384.2L433.4 380.1L431.2 383.9ZM432.7 388.8L437.6 387.9L439.7 384.2L435.5 384.7Z" fill="#5a9a28" fill-opacity="0.45" stroke="#5fa02a" stroke-width="0.8"/>
<path d="M421.5 408.5L421.1 410L421.2 411.5L420.3 412.8L420 414.3L418.5 415.1L417.7 416.4L416.1 416.8L415 418L413.4 418.3L411.9 417.8L410.4 418.1L409 417.4L407.5 417.1L406.1 416.5L405.3 415.1L404.3 414L403.7 412.7L403.1 411.4L402.4 410L402.6 408.5L402.7 407L402.6 405.5L403.5 404.2L404.2 402.9L405.2 401.8L406.1 400.5L407.6 400.1L408.9 399.3L410.3 398.7L411.9 398.8L413.4 399.2L414.8 399.6L416.3 399.8L417.4 400.9L418.6 401.8L419.9 402.7L420.7 404L420.9 405.6L421.3 407Z" fill="none" stroke="#5a9a28" stroke-width="1"/><path d="M411.1 408.8L415.4 410.4L418.6 408.2L415 406.5ZM411.1 408.8L412.8 412.8L416.5 413.3L415.3 409.8ZM411.1 408.8L410.5 413.1L413.4 415.5L414.2 411.9ZM411.1 408.8L407.4 412L407.5 416.1L410.9 413.7ZM411.1 408.8L406.4 408.8L403.9 412L407.9 412.3ZM411.1 408.8L407.6 404.9L403.2 404.9L405.9 408.4ZM411.1 408.8L410.1 403.5L406.3 401.1L406.8 405.6ZM411.1 408.8L412.9 404.2L410.9 400.5L409.1 404.3ZM411.1 408.8L415.7 407.8L417.4 404.2L413.5 404.7Z" fill="#5a9a28" fill-opacity="0.45" stroke="#5fa02a" stroke-width="0.8"/>
<path d="M407.6 434.6L407.7 436.1L407.1 437.5L407 439L406.1 440.2L404.8 441.1L403.7 442.1L402.7 443.3L401.2 443.5L399.8 444.3L398.3 444.3L396.8 444.1L395.2 444L393.9 443.2L392.6 442.4L391.6 441.3L390.7 440.1L390 438.8L389.2 437.5L388.9 436.1L388.5 434.6L389 433.1L389.2 431.7L389.4 430.1L390.5 428.9L391.4 427.7L392.6 426.7L393.8 425.8L395.4 425.7L396.8 424.9L398.3 425.3L399.8 425.3L401.3 425.4L402.6 426.2L403.9 426.8L404.9 428L405.9 429.1L406.8 430.3L407.5 431.6L407.9 433.1Z" fill="none" stroke="#5a9a28" stroke-width="1"/><path d="M397.5 434.9L401.8 436.8L405.2 434.9L401.8 433ZM397.5 434.9L399.1 439.9L403.1 441.7L402.1 437.4ZM397.5 434.9L396.3 439.6L398.8 443L400.1 439ZM397.5 434.9L394.2 437.9L394.8 441.6L397.8 439.3ZM397.5 434.9L392.1 435.7L389.4 439.5L394 439.1ZM397.5 434.9L395 431.4L391.4 431.7L393.3 434.9ZM397.5 434.9L397.4 430.2L394.2 427.9L393.9 431.9ZM397.5 434.9L400.4 431.1L399.4 427.2L396.7 430.2ZM397.5 434.9L401.6 433.6L402.5 430.1L398.9 430.9Z" fill="#5a9a28" fill-opacity="0.45" stroke="#5fa02a" stroke-width="0.8"/>
</g>
</svg></div>
<svg class="a" width="1500" height="46" viewBox="0 24 1500 46" style="left:0;top:24px">
<defs>
<linearGradient id="gLens" x1="0" y1="0" x2="0" y2="1"><stop offset="0" stop-color="#9cc0ea"/><stop offset="0.48" stop-color="#7aa8e0"/><stop offset="0.52" stop-color="#4f88d2"/><stop offset="1" stop-color="#6ea4e6"/></linearGradient>
<linearGradient id="gLensD" x1="0" y1="0" x2="0" y2="1"><stop offset="0" stop-color="#c4d6ee"/><stop offset="0.48" stop-color="#b4cae8"/><stop offset="0.52" stop-color="#a0bce2"/><stop offset="1" stop-color="#b4ccec"/></linearGradient>
<linearGradient id="gPage" x1="0" y1="0" x2="1" y2="1"><stop offset="0" stop-color="#fdfdfd"/><stop offset="1" stop-color="#e2e2e2"/></linearGradient>
<linearGradient id="gFlop" x1="0" y1="0" x2="1" y2="1"><stop offset="0" stop-color="#6aa2ff"/><stop offset="1" stop-color="#3f7ef0"/></linearGradient>
<linearGradient id="gUndo" x1="0" y1="0" x2="1" y2="1"><stop offset="0" stop-color="#7ccf5c"/><stop offset="1" stop-color="#1f8f2f"/></linearGradient>
<linearGradient id="gRedo" x1="1" y1="0" x2="0" y2="1"><stop offset="0" stop-color="#c2e4b4"/><stop offset="1" stop-color="#8cc896"/></linearGradient>
<linearGradient id="gFold" x1="0" y1="0" x2="0" y2="1"><stop offset="0" stop-color="#8ab0dc"/><stop offset="1" stop-color="#5a8cc8"/></linearGradient>
<radialGradient id="gGlow"><stop offset="0" stop-color="#ffffd0"/><stop offset="0.3" stop-color="#f4ec30"/><stop offset="0.75" stop-color="#e8de20" stop-opacity="0.9"/><stop offset="1" stop-color="#e8de20" stop-opacity="0"/></radialGradient>
<radialGradient id="gShadow"><stop offset="0" stop-color="#000" stop-opacity="0.28"/><stop offset="1" stop-color="#000" stop-opacity="0"/></radialGradient>
</defs>
<rect x="12" y="25" width="43" height="44" rx="3.5" fill="#b4b4b4"/>
<rect x="805" y="25" width="43" height="44" rx="3.5" fill="#b4b4b4"/>
<rect x="862" y="25" width="43" height="44" rx="3.5" fill="#b4b4b4"/>
<rect x="7" y="32" width="2" height="2" fill="#8e8e8e"/>
<rect x="7" y="38" width="2" height="2" fill="#8e8e8e"/>
<rect x="7" y="44" width="2" height="2" fill="#8e8e8e"/>
<rect x="7" y="50" width="2" height="2" fill="#8e8e8e"/>
<rect x="7" y="56" width="2" height="2" fill="#8e8e8e"/>
<rect x="88" y="32" width="2" height="2" fill="#8e8e8e"/>
<rect x="88" y="38" width="2" height="2" fill="#8e8e8e"/>
<rect x="88" y="44" width="2" height="2" fill="#8e8e8e"/>
<rect x="88" y="50" width="2" height="2" fill="#8e8e8e"/>
<rect x="88" y="56" width="2" height="2" fill="#8e8e8e"/>
<rect x="403" y="32" width="2" height="2" fill="#8e8e8e"/>
<rect x="403" y="38" width="2" height="2" fill="#8e8e8e"/>
<rect x="403" y="44" width="2" height="2" fill="#8e8e8e"/>
<rect x="403" y="50" width="2" height="2" fill="#8e8e8e"/>
<rect x="403" y="56" width="2" height="2" fill="#8e8e8e"/>
<rect x="708" y="32" width="2" height="2" fill="#8e8e8e"/>
<rect x="708" y="38" width="2" height="2" fill="#8e8e8e"/>
<rect x="708" y="44" width="2" height="2" fill="#8e8e8e"/>
<rect x="708" y="50" width="2" height="2" fill="#8e8e8e"/>
<rect x="708" y="56" width="2" height="2" fill="#8e8e8e"/>
<path d="M187.5 26V66M289.5 26V66M345.5 26V66M502.5 26V66M558.5 26V66M854.5 26V66M911.5 26V66" stroke="#585858" stroke-width="1" stroke-dasharray="1 2" fill="none" shape-rendering="crispEdges"/>
<path d="M27.2 35.6V52.6L31.1 48.9L34.7 56.8L37.7 55.4L34.2 47.7L39 47.5Z" fill="#fff" stroke="#3c3c3c" stroke-width="1" stroke-linejoin="round"/>
<ellipse cx="113.5" cy="60" rx="13.5" ry="1.6" fill="#000" opacity="0.3"/>
<rect x="101.3" y="32.4" width="24.4" height="27.3" rx="1.2" fill="url(#gPage)" stroke="#9a9a9a" stroke-width="0.9"/>
<path d="M103.3 42.3h1M103.3 49.6h1" stroke="#b8b8b8" stroke-width="0.8"/>
<circle cx="121.8" cy="37.6" r="6.6" fill="url(#gGlow)"/>
<path d="M144.6 35.4h6l1.2 -1.4h7v24.6h-11.6z" fill="#8e8e8e" stroke="#6a6a6a" stroke-width="0.8"/>
<path d="M151.6 32.4h21l-1.6 12h-22.6z" fill="#f4f4f4" stroke="#8a8a8a" stroke-width="0.8"/>
<path d="M154 35.6h15M153.6 38h15" stroke="#b4b4b4" stroke-width="1.2"/>
<path d="M151.6 43.6h24l-3.8 14.4h-25z" fill="url(#gFold)" stroke="#4a78b4" stroke-width="0.9" stroke-linejoin="round"/>
<rect x="203.4" y="33" width="24.6" height="25.6" rx="3" fill="url(#gFlop)" stroke="#2a2aa8" stroke-width="1"/><rect x="207.0" y="34.6" width="17.4" height="10.6" fill="#f2f6ff"/><path d="M207.0 45.2L224.4 34.6V45.2Z" fill="#dfe8ff" opacity="0.8"/><rect x="209.0" y="48.2" width="12.2" height="9.4" fill="#e4e4ec" stroke="#9aa0c0" stroke-width="0.5"/><rect x="211.0" y="50.4" width="1.8" height="4.4" fill="#1a2ad0"/><rect x="225.8" y="35.6" width="0.9" height="0.9" fill="#1a2ad0"/>
<rect x="249.4" y="33" width="24.6" height="25.6" rx="3" fill="url(#gFlop)" stroke="#2a2aa8" stroke-width="1"/><rect x="253.0" y="34.6" width="17.4" height="10.6" fill="#f2f6ff"/><path d="M253.0 45.2L270.4 34.6V45.2Z" fill="#dfe8ff" opacity="0.8"/><rect x="255.0" y="48.2" width="12.2" height="9.4" fill="#e4e4ec" stroke="#9aa0c0" stroke-width="0.5"/><rect x="257.0" y="50.4" width="1.8" height="4.4" fill="#1a2ad0"/><rect x="271.8" y="35.6" width="0.9" height="0.9" fill="#1a2ad0"/>
<path d="M260.0 50.4L265.4 47.9L262.0 44.8Z" fill="#f0d0a0" stroke="#7a4a10" stroke-width="0.6" stroke-linejoin="round"/><path d="M260.0 50.4L261.9 49.5L260.7 48.4Z" fill="#222"/><path d="M265.4 47.9L274.5 37.8L271.1 34.7L262.0 44.8Z" fill="#f5a81c" stroke="#9a5a08" stroke-width="0.6" stroke-linejoin="round"/><path d="M264.3 46.9L273.4 36.8" stroke="#c87808" stroke-width="1.4"/><path d="M274.5 37.8L276.4 35.8L276.3 33.8L274.9 32.6L273.0 32.7L271.1 34.7Z" fill="#e03020" stroke="#8a2a10" stroke-width="0.6" stroke-linejoin="round"/><path d="M274.5 37.8L271.1 34.7" stroke="#e8e8e8" stroke-width="1.1" opacity="0.9"/>
<g fill="#000"><circle cx="310.2" cy="43.6" r="3.500"/><circle cx="312.6" cy="38.8" r="3.500"/><circle cx="318" cy="36.4" r="3.500"/><circle cx="323.4" cy="38.8" r="3.500"/><circle cx="325.8" cy="43.6" r="3.500"/><path d="M318 46L310.2 43.6M318 46L312.6 38.8M318 46L318 36.4M318 46L323.4 38.8M318 46L325.8 43.6" stroke="#000" stroke-width="4.400" stroke-linecap="round"/></g><g fill="#f7a823"><circle cx="310.2" cy="43.6" r="2.300"/><circle cx="312.6" cy="38.8" r="2.300"/><circle cx="318" cy="36.4" r="2.300"/><circle cx="323.4" cy="38.8" r="2.300"/><circle cx="325.8" cy="43.6" r="2.300"/><path d="M318 46L310.2 43.6M318 46L312.6 38.8M318 46L318 36.4M318 46L323.4 38.8M318 46L325.8 43.6" stroke="#f7a823" stroke-width="2.200" stroke-linecap="round"/></g>
<rect x="306.2" y="45.4" width="23.6" height="12.8" rx="2.6" fill="#000"/>
<text x="318" y="56.900" font-family="Liberation Sans, sans-serif" font-weight="bold" font-size="12.600" text-anchor="middle" fill="#fff" textLength="19.400" lengthAdjust="spacingAndGlyphs">SVG</text>
<ellipse cx="374" cy="58.2" rx="13.5" ry="1.8" fill="#000" opacity="0.22"/>
<path d="M364.6 32.6h18.8v12h-18.8z" fill="#ececec" stroke="#b0b0b0" stroke-width="0.8"/>
<path d="M362.2 43.6h23.4l2.2 4.4v8.4q0 1.2 -1.2 1.2h-25.2q-1.2 0 -1.2 -1.2v-8.4z" fill="#dcdcdc" stroke="#a4a4a4" stroke-width="0.8"/>
<path d="M360 50h28v6.4q0 1.2 -1.2 1.2h-25.6q-1.2 0 -1.2 -1.2z" fill="#c8c8c8"/>
<path d="M374.4 45.4L382 52" stroke="#a8a8a8" stroke-width="3" stroke-linecap="round"/>
<circle cx="369.6" cy="40" r="5.8" fill="#b8d4f0" stroke="#6a94c8" stroke-width="1.4"/>
<path d="M366 38.4a4 4 0 0 1 5 -2.6" stroke="#fff" stroke-width="1.2" fill="none" opacity="0.8"/>
<path d="M414.6 37.2L415.2 51.6L427.4 51.2L422.8 46.8C426 41.5 433.5 39.5 437 44C440 48.5 436.5 54.5 427.6 56C426.400 56.400 426.400 57.400 427.400 57.600C436 58.600 443.400 52.500 443.200 45C443 37.500 436 33 429 33.600C425 34 421.500 36 419.200 39.400Z" fill="url(#gUndo)" stroke="#1a7a24" stroke-width="0.9" stroke-linejoin="round"/>
<g transform="translate(903.6 0) scale(-1 1)"><path d="M414.6 37.2L415.2 51.6L427.4 51.2L422.8 46.8C426 41.5 433.5 39.5 437 44C440 48.5 436.5 54.5 427.6 56C426.400 56.400 426.400 57.400 427.400 57.600C436 58.600 443.400 52.500 443.200 45C443 37.500 436 33 429 33.600C425 34 421.500 36 419.200 39.400Z" fill="url(#gRedo)" stroke="#8cc49a" stroke-width="0.9" stroke-linejoin="round"/></g>
<ellipse cx="531" cy="57" rx="12" ry="1.6" fill="#000" opacity="0.12"/>
<g transform="translate(531.4 45.2) rotate(-42)"><rect x="-13.6" y="-4.6" width="27.2" height="9.2" rx="1" fill="#e08888"/><rect x="-9.4" y="-1.6" width="23" height="3.2" fill="#f4f4f4"/><rect x="-13.6" y="-4.6" width="4.4" height="9.2" fill="#f6f6f6" stroke="#c8a0a0" stroke-width="0.5"/></g>
<path d="M586.2 45.6L585.6 33.4q2.200 -2.400 4.400 -2.600L590.4 46.6Z" fill="#ececec" stroke="#a0a0a0" stroke-width="0.7"/>
<path d="M589.6 44L600.6 37.600q0.8 2 0 4.200L590.6 47.6Z" fill="#ececec" stroke="#808080" stroke-width="0.7"/>
<ellipse cx="579.4" cy="47.6" rx="5.2" ry="3" transform="rotate(-20 579.4 47.6)" fill="none" stroke="#e58a8e" stroke-width="2.2"/>
<ellipse cx="589.4" cy="54.6" rx="3" ry="5.2" transform="rotate(-8 589.4 54.6)" fill="none" stroke="#e58a8e" stroke-width="2.2"/>
<path d="M584 46L589.4 48.600" stroke="#e58a8e" stroke-width="2.4"/>
<path d="M573.2 57.600h6.400M576.4 54.400v6.400" stroke="#333" stroke-width="0.9"/>
<rect x="618.4" y="30.8" width="20.6" height="25.6" rx="1.2" fill="#f2f2f2" stroke="#c4c4c4" stroke-width="0.8"/>
<path d="M622 40h6M622 42.600h6M622 45.200h6M622 47.800h6" stroke="#d0d0d0" stroke-width="1"/>
<path d="M627.400 36.600h20q0.600 0 0.600 0.600v19.400l-5 4.800h-15.600q-0.600 0 -0.600 -0.600v-23.600q0 -0.600 0.600 -0.600z" fill="url(#gPage)" stroke="#b4b4b4" stroke-width="0.8"/>
<path d="M631 43.400h13.400M631 46h13.400M631 48.600h11.400M631 51.200h13.400" stroke="#c8c8c8" stroke-width="1"/>
<path d="M643 61.400v-4.800h5z" fill="#d4d4d4" stroke="#b0b0b0" stroke-width="0.6"/>
<path d="M619 56.600h6.400M622.200 53.400v6.400" stroke="#333" stroke-width="0.9"/>
<rect x="665.8" y="33" width="28" height="27.4" rx="1.4" fill="#c88a24" stroke="#8a5a10" stroke-width="0.9"/>
<path d="M669.200 35.400h21.400v18.400l-4.800 4.600h-16.600z" fill="#fafafa" stroke="#b8b8b8" stroke-width="0.6"/>
<path d="M672 40.400h14M672 43h14M672 45.600h12M672 48.200h14M672 50.800h9" stroke="#c4c4c4" stroke-width="1"/>
<path d="M685.800 58.400v-4.600h4.800z" fill="#9a9a9a"/>
<path d="M672.400 33.400q0 -1.400 1.400 -1.400h1.400v-1.400h9.600v1.400h1.400q1.400 0 1.400 1.400v3.200h-15.200z" fill="#8e8e82" stroke="#5e5e56" stroke-width="0.7"/>
<path d="M724.6 54.8L732.3 51.7L727.9 47.1Z" fill="#f0c8a0" stroke="#7a4a10" stroke-width="0.6" stroke-linejoin="round"/><path d="M724.6 54.8L727.3 53.7L725.7 52.1Z" fill="#222"/><path d="M732.3 51.7L741.5 42.7L737.0 38.1L727.9 47.1Z" fill="#e03a24" stroke="#9a5a08" stroke-width="0.6" stroke-linejoin="round"/><path d="M730.9 50.2L740.1 41.2" stroke="#b01c10" stroke-width="1.9"/><path d="M741.5 42.7L744.3 40.0L744.3 37.3L742.5 35.5L739.8 35.5L737.0 38.1Z" fill="#f02020" stroke="#8a2a10" stroke-width="0.6" stroke-linejoin="round"/><path d="M741.5 42.7L737.0 38.1" stroke="#e8e8e8" stroke-width="1.1" opacity="0.9"/>
<path d="M723 56.400h22" stroke="#f00" stroke-width="1.2"/>
<rect x="765.600" y="35.600" width="28.600" height="21.600" rx="0.8" fill="#00007e" stroke="#2a2a2a" stroke-width="1"/>
<path d="M769.600 53.800L790.800 39.400" stroke="#fff" stroke-width="1.1"/>
<path d="M790.800 39.400V53.800H769.600" stroke="#e8e8f4" stroke-width="1.3" fill="none" stroke-dasharray="3 1.600"/>
<circle cx="825" cy="45.600" r="12.900" fill="none" stroke="#000" stroke-width="1.700"/>
<path d="M812.2 48.400A12.900 12.900 0 0 1 833.800 36.200" fill="none" stroke="#b4b4b4" stroke-width="2.2" stroke-dasharray="1.2 3.200"/>
<path d="M812 59.800L841.600 30.600" stroke="#1418f0" stroke-width="1.1"/>
<rect x="869.9" y="32.9" width="2.2" height="2.2" fill="#000"/>
<rect x="869.9" y="40.9" width="2.2" height="2.2" fill="#000"/>
<rect x="869.9" y="48.9" width="2.2" height="2.2" fill="#000"/>
<rect x="869.9" y="56.9" width="2.2" height="2.2" fill="#000"/>
<rect x="877.9" y="32.9" width="2.2" height="2.2" fill="#000"/>
<rect x="877.9" y="40.9" width="2.2" height="2.2" fill="#000"/>
<rect x="877.9" y="48.9" width="2.2" height="2.2" fill="#000"/>
<rect x="877.9" y="56.9" width="2.2" height="2.2" fill="#000"/>
<rect x="885.9" y="32.9" width="2.2" height="2.2" fill="#000"/>
<rect x="885.9" y="40.9" width="2.2" height="2.2" fill="#000"/>
<rect x="885.9" y="48.9" width="2.2" height="2.2" fill="#000"/>
<rect x="885.9" y="56.9" width="2.2" height="2.2" fill="#000"/>
<rect x="893.9" y="32.9" width="2.2" height="2.2" fill="#000"/>
<rect x="893.9" y="40.9" width="2.2" height="2.2" fill="#000"/>
<rect x="893.9" y="48.9" width="2.2" height="2.2" fill="#000"/>
<rect x="893.9" y="56.9" width="2.2" height="2.2" fill="#000"/>
<ellipse cx="941" cy="57.4" rx="15" ry="2.6" fill="url(#gShadow)" opacity="0.8"/><path d="M944.6 51L951.6 57.2" stroke="#5a5a5a" stroke-width="4" stroke-linecap="round"/><path d="M945.6 51.4L951.2 56.4" stroke="#9a9a9a" stroke-width="1" stroke-linecap="round" stroke-dasharray="0.8 1" opacity="0.8"/><circle cx="936" cy="42" r="11.4" fill="#ecece4" stroke="#b0b0a4" stroke-width="0.8"/><circle cx="936" cy="42" r="9.2" fill="url(#gLens)" stroke="#7a94b8" stroke-width="0.5" stroke-opacity="0.6"/>
<path d="M930.400 42h11.200M936 36.400v11.200" stroke="#fff" stroke-width="3"/>
<ellipse cx="987" cy="57.4" rx="15" ry="2.6" fill="url(#gShadow)" opacity="0.8"/><path d="M990.6 51L997.6 57.2" stroke="#5a5a5a" stroke-width="4" stroke-linecap="round"/><path d="M991.6 51.4L997.2 56.4" stroke="#9a9a9a" stroke-width="1" stroke-linecap="round" stroke-dasharray="0.8 1" opacity="0.8"/><circle cx="982" cy="42" r="11.4" fill="#ecece4" stroke="#b0b0a4" stroke-width="0.8"/><circle cx="982" cy="42" r="9.2" fill="url(#gLens)" stroke="#7a94b8" stroke-width="0.5" stroke-opacity="0.6"/>
<path d="M976.400 42h11.200" stroke="#fff" stroke-width="3"/>
<ellipse cx="1033" cy="57.4" rx="15" ry="2.6" fill="url(#gShadow)" opacity="0.8"/><path d="M1036.6 51L1043.6 57.2" stroke="#5a5a5a" stroke-width="4" stroke-linecap="round"/><path d="M1037.6 51.4L1043.2 56.4" stroke="#9a9a9a" stroke-width="1" stroke-linecap="round" stroke-dasharray="0.8 1" opacity="0.8"/><circle cx="1028" cy="42" r="11.4" fill="#ecece4" stroke="#b0b0a4" stroke-width="0.8"/><circle cx="1028" cy="42" r="9.2" fill="url(#gLens)" stroke="#7a94b8" stroke-width="0.5" stroke-opacity="0.6"/>
<rect x="1024.600" y="38.800" width="6.800" height="6.400" fill="#a4c4ee"/>
<path d="M1022 40.200v-4h4.400M1029.600 36.200h4.400v4M1034 43.800v4h-4.400M1026.400 47.800h-4.400v-4" stroke="#fff" stroke-width="2" fill="none"/>
<ellipse cx="1079" cy="57.4" rx="15" ry="2.6" fill="url(#gShadow)" opacity="0.4"/><path d="M1082.6 51L1089.6 57.2" stroke="#b0b0b0" stroke-width="4" stroke-linecap="round"/><path d="M1083.6 51.4L1089.2 56.4" stroke="#9a9a9a" stroke-width="1" stroke-linecap="round" stroke-dasharray="0.8 1" opacity="0.4"/><circle cx="1074" cy="42" r="11.4" fill="#ecece4" stroke="#b0b0a4" stroke-width="0.8"/><circle cx="1074" cy="42" r="9.2" fill="url(#gLensD)" stroke="#7a94b8" stroke-width="0.5" stroke-opacity="0.3"/>
<rect x="1070.600" y="38.800" width="6.800" height="6.400" fill="#c4d4ec"/>
<path d="M1068 40.200v-4h4.400M1075.600 36.200h4.400v4M1080 43.800v4h-4.400M1072.400 47.800h-4.400v-4" stroke="#f06464" stroke-width="2" fill="none"/>
<ellipse cx="1125" cy="57.4" rx="15" ry="2.6" fill="url(#gShadow)" opacity="0.8"/><path d="M1128.6 51L1135.6 57.2" stroke="#5a5a5a" stroke-width="4" stroke-linecap="round"/><path d="M1129.6 51.4L1135.2 56.4" stroke="#9a9a9a" stroke-width="1" stroke-linecap="round" stroke-dasharray="0.8 1" opacity="0.8"/><circle cx="1120" cy="42" r="11.4" fill="#ecece4" stroke="#b0b0a4" stroke-width="0.8"/><circle cx="1120" cy="42" r="9.2" fill="url(#gLens)" stroke="#7a94b8" stroke-width="0.5" stroke-opacity="0.6"/>
<path d="M1112.400 42l6.200 -5.400v3.200h8.200v4.400h-8.200v3.200z" fill="#fff" stroke="#3a74c4" stroke-width="0.5"/>
<rect x="1154.600" y="30.600" width="26.800" height="17.600" rx="1" fill="#fff" stroke="#5a8cd4" stroke-width="1"/>
<ellipse cx="1173.4" cy="60.4" rx="15" ry="2.6" fill="url(#gShadow)" opacity="0.8"/><path d="M1177.0 54L1184.0 60.2" stroke="#5a5a5a" stroke-width="4" stroke-linecap="round"/><path d="M1178.0 54.4L1183.6000000000001 59.4" stroke="#9a9a9a" stroke-width="1" stroke-linecap="round" stroke-dasharray="0.8 1" opacity="0.8"/><circle cx="1168.4" cy="45" r="10.2" fill="#ecece4" stroke="#b0b0a4" stroke-width="0.8"/><circle cx="1168.4" cy="45" r="7.999999999999999" fill="url(#gLens)" stroke="#7a94b8" stroke-width="0.5" stroke-opacity="0.6"/>
<ellipse cx="1218" cy="58.4" rx="15" ry="2.6" fill="url(#gShadow)" opacity="0.8"/><path d="M1221.6 52L1228.6 58.2" stroke="#5a5a5a" stroke-width="4" stroke-linecap="round"/><path d="M1222.6 52.4L1228.2 57.4" stroke="#9a9a9a" stroke-width="1" stroke-linecap="round" stroke-dasharray="0.8 1" opacity="0.8"/><circle cx="1213" cy="43" r="11.2" fill="#ecece4" stroke="#b0b0a4" stroke-width="0.8"/><circle cx="1213" cy="43" r="9.0" fill="url(#gLens)" stroke="#7a94b8" stroke-width="0.5" stroke-opacity="0.6"/>
<path d="M1213 30.400l3.200 4.400h-1.800v6.600h6.600v-1.800l4.400 3.200l-4.400 3.200v-1.800h-6.600v6.600h1.800l-3.200 4.400l-3.200 -4.400h1.800v-6.600h-6.600v1.800l-4.400 -3.200l4.400 -3.200v1.800h6.600v-6.600h-1.800z" fill="#fff" stroke="#3a78d0" stroke-width="0.7" stroke-linejoin="round"/>
</svg>
<svg class="a" width="200" height="39" viewBox="0 69 200 39" style="left:0;top:69px">
<rect x="7" y="77" width="2" height="2" fill="#8e8e8e"/>
<rect x="7" y="83" width="2" height="2" fill="#8e8e8e"/>
<rect x="7" y="89" width="2" height="2" fill="#8e8e8e"/>
<rect x="7" y="95" width="2" height="2" fill="#8e8e8e"/>
<defs><linearGradient id="gBtn2" x1="0" y1="0" x2="0" y2="1"><stop offset="0" stop-color="#fbfbfb"/><stop offset="0.45" stop-color="#f0f0f0"/><stop offset="0.55" stop-color="#e6e6e6"/><stop offset="1" stop-color="#f2f2f2"/></linearGradient></defs>
<rect x="15" y="73" width="42.600" height="30.600" rx="4.600" fill="url(#gBtn2)" stroke="#838383" stroke-width="1.900"/>
<path d="M31.200 79.600V93.200L34.300 90.300L37.100 96.600L39.500 95.500L36.700 89.400L40.500 89.200Z" fill="#fff" stroke="#3c3c3c" stroke-width="0.9" stroke-linejoin="round"/>
<path d="M67.500 71V105" stroke="#585858" stroke-width="1" stroke-dasharray="1 2" fill="none" shape-rendering="crispEdges"/>
</svg>
<svg class="a" width="72" height="400" viewBox="0 108 72 400" style="left:0;top:108px">
<defs><linearGradient id="gLB" x1="0" y1="0" x2="0" y2="1"><stop offset="0" stop-color="#fcfcfc"/><stop offset="0.12" stop-color="#f4f4f4"/><stop offset="0.5" stop-color="#e8e8e8"/><stop offset="0.75" stop-color="#f0f0f0"/><stop offset="1" stop-color="#f6f6f6"/></linearGradient><pattern id="hat" width="2.4" height="2.4" patternUnits="userSpaceOnUse" patternTransform="rotate(-45)"><rect width="2.4" height="2.4" fill="#e0e0e0"/><rect width="2.4" height="0.8" fill="#6a6a6a"/></pattern></defs>
<rect x="7" y="116" width="2" height="2" fill="#a2a2a2"/>
<rect x="13" y="116" width="2" height="2" fill="#a2a2a2"/>
<rect x="19" y="116" width="2" height="2" fill="#a2a2a2"/>
<rect x="25" y="116" width="2" height="2" fill="#a2a2a2"/>
<rect x="31" y="116" width="2" height="2" fill="#a2a2a2"/>
<rect x="37" y="116" width="2" height="2" fill="#a2a2a2"/>
<rect x="43" y="116" width="2" height="2" fill="#a2a2a2"/>
<rect x="49" y="116" width="2" height="2" fill="#a2a2a2"/>
<rect x="55" y="116" width="2" height="2" fill="#a2a2a2"/>
<rect x="61" y="116" width="2" height="2" fill="#a2a2a2"/>
<rect x="1.7" y="122.5" width="33.6" height="33.8" fill="url(#gLB)" stroke="#8e8e8e" stroke-width="1"/>
<path d="M31.0 147.4V151.8H26.6Z" fill="#000"/>
<rect x="36.9" y="122.5" width="33.6" height="33.8" fill="url(#gLB)" stroke="#8e8e8e" stroke-width="1"/>
<path d="M66.2 147.4V151.8H61.8Z" fill="#000"/>
<rect x="1.7" y="157.5" width="33.6" height="33.8" fill="url(#gLB)" stroke="#8e8e8e" stroke-width="1"/>
<path d="M31.0 182.4V186.8H26.6Z" fill="#000"/>
<rect x="36.9" y="157.5" width="33.6" height="33.8" fill="url(#gLB)" stroke="#8e8e8e" stroke-width="1"/>
<path d="M66.2 182.4V186.8H61.8Z" fill="#000"/>
<rect x="1.7" y="192.5" width="33.6" height="33.8" fill="url(#gLB)" stroke="#8e8e8e" stroke-width="1"/>
<path d="M31.0 217.4V221.8H26.6Z" fill="#000"/>
<rect x="36.9" y="192.5" width="33.6" height="33.8" fill="url(#gLB)" stroke="#8e8e8e" stroke-width="1"/>
<path d="M66.2 217.4V221.8H61.8Z" fill="#000"/>
<rect x="1.7" y="227.5" width="33.6" height="33.8" fill="url(#gLB)" stroke="#8e8e8e" stroke-width="1"/>
<path d="M31.0 252.4V256.8H26.6Z" fill="#000"/>
<rect x="36.9" y="227.5" width="33.6" height="33.8" fill="url(#gLB)" stroke="#8e8e8e" stroke-width="1"/>
<path d="M66.2 252.4V256.8H61.8Z" fill="#000"/>
<rect x="1.7" y="262.5" width="33.6" height="33.8" fill="url(#gLB)" stroke="#8e8e8e" stroke-width="1"/>
<path d="M31.0 287.4V291.8H26.6Z" fill="#000"/>
<rect x="1.7" y="305.5" width="33.6" height="33.8" fill="url(#gLB)" stroke="#8e8e8e" stroke-width="1"/>
<rect x="36.9" y="305.5" width="33.6" height="33.8" fill="url(#gLB)" stroke="#8e8e8e" stroke-width="1"/>
<path d="M66.2 330.4V334.8H61.8Z" fill="#000"/>
<rect x="1.7" y="340.5" width="33.6" height="33.8" fill="url(#gLB)" stroke="#8e8e8e" stroke-width="1"/>
<rect x="1.7" y="383.5" width="33.6" height="33.8" fill="url(#gLB)" stroke="#8e8e8e" stroke-width="1"/>
<path d="M31.0 408.4V412.8H26.6Z" fill="#000"/>
<rect x="36.9" y="383.5" width="33.6" height="33.8" fill="url(#gLB)" stroke="#8e8e8e" stroke-width="1"/>
<rect x="1.7" y="418.5" width="33.6" height="33.8" fill="url(#gLB)" stroke="#8e8e8e" stroke-width="1"/>
<rect x="36.9" y="418.5" width="33.6" height="33.8" fill="url(#gLB)" stroke="#8e8e8e" stroke-width="1"/>
<path d="M66.2 443.4V447.8H61.8Z" fill="#000"/>
<rect x="1.7" y="461.5" width="33.6" height="33.8" fill="url(#gLB)" stroke="#8e8e8e" stroke-width="1"/>
<path d="M31.0 486.4V490.8H26.6Z" fill="#000"/>
<path d="M8.3 131.7h6.4M11.5 128.5v6.4" fill="none" stroke="#1a1a1a" stroke-width="1"/>
<path d="M22.2 140.5h6.4M25.4 137.3v6.4" fill="none" stroke="#1a1a1a" stroke-width="1"/>
<path d="M9.100000000000001 146.4h6.4M12.3 143.20000000000002v6.4" fill="none" stroke="#1a1a1a" stroke-width="1"/>
<path d="M41.6 144.8L65 134" fill="none" stroke="#1a1a1a" stroke-width="1"/>
<path d="M7.7 183.2A19.6 19.6 0 0 1 27.5 163.7" fill="none" stroke="#1a1a1a" stroke-width="1"/>
<circle cx="52.3" cy="173.3" r="9.8" fill="none" stroke="#1a1a1a" stroke-width="1"/>
<ellipse cx="17.9" cy="208.8" rx="14" ry="6" transform="rotate(-45 17.9 208.8)" fill="none" stroke="#1a1a1a" stroke-width="1"/>
<path d="M41.6 204C41.600 197.500 47 197.500 52 203.500S61.500 214.500 63.600 209.500S62.500 196.500 58.500 199.500S52 219.500 47.500 217.500S41.600 209 41.600 204Z" fill="none" stroke="#1a1a1a" stroke-width="1"/>
<path d="M13.9 239.2A4.600 4.600 0 0 0 13.300 248.300H27.500" fill="none" stroke="#1a1a1a" stroke-width="1"/>
<path d="M40.400 238.100L43.900 231.900H51.100L54.700 238.100L51.100 244.300H43.900Z M60.300 236.700L65.600 245.200H55.400Z M41.200 248.800H55.400V255.400H41.200Z" fill="none" stroke="#1a1a1a" stroke-width="1" stroke-linejoin="round"/>
<path d="M7.500 280.400L14.400 272.300H28.300V286.400H7.500Z" fill="url(#hat)" stroke="#1a1a1a" stroke-width="1"/>
<circle cx="20.300" cy="279.900" r="3" fill="#f2f2f2" stroke="#1a1a1a" stroke-width="0.9"/>
<text x="18.200" y="331.800" font-family="Liberation Serif, serif" font-size="27.500" text-anchor="middle" fill="#000">A</text>
<path d="M43.300 314V329.800M61.700 314V329.800M43.300 316.200H61.700" fill="none" stroke="#1a1a1a" stroke-width="1"/>
<path d="M43.600 316.200l3.600 -1.500v3zM61.400 316.200l-3.600 -1.500v3z" fill="#1a1a1a"/>
<rect x="6.800" y="348.500" width="22.300" height="17.200" fill="#fff" stroke="#555" stroke-width="1"/>
<path d="M9.700 362.500V357.500L13.300 354.500L16 357L20.200 352.600L26 358.800V362.500Z" fill="#000"/>
<circle cx="24.500" cy="352.600" r="1.600" fill="#000"/>
<path d="M5.200 393.200V412.500H24Z M9.500 402.500V408.600H15.600Z" fill="none" stroke="#1a1a1a" stroke-width="1" stroke-width="1.1" fill-rule="evenodd"/>
<g transform="translate(10.4 388.500) rotate(45)"><rect x="0" y="-2" width="10" height="4" fill="#e02818" stroke="#8a1a10" stroke-width="0.5"/><rect x="0" y="-2" width="2" height="4" fill="#f08070"/><path d="M10 -2L13.600 0L10 2Z" fill="#f0c8a0" stroke="#8a5a30" stroke-width="0.4"/></g>
<path d="M26.500 387.700V391M26.500 391L23 404.400M26.500 391L29.300 404.400" fill="none" stroke="#1a1a1a" stroke-width="1" stroke-width="0.9"/>
<circle cx="26.500" cy="391" r="1.100" fill="#fff" stroke="#1a1a1a" stroke-width="0.7"/>
<rect x="41.200" y="396.200" width="23.600" height="7.400" rx="0.8" fill="#fff" stroke="#8a8a8a" stroke-width="0.9"/>
<path d="M43.500 396.500v2M45.500 396.500v1.200M47.500 396.500v2M49.500 396.500v1.200M51.500 396.500v1.200M53.500 396.500v2.800M55.500 396.500v1.200M57.500 396.500v1.200M59.500 396.500v2M61.500 396.500v1.200M62.800 396.500v2" stroke="#6a6a6a" stroke-width="0.7"/>
<rect x="7.600" y="425.600" width="17" height="12.400" fill="#f1eedd" stroke="#a4a4a4" stroke-width="1"/>
<circle cx="21.900" cy="436.900" r="6.900" fill="#f1eedd" fill-opacity="0.85" stroke="#a4a4a4" stroke-width="1"/>
<circle cx="7.700" cy="438.200" r="1.500" fill="#f6a0a0"/>
<path d="M41.800 433.700L58.900 423.900" stroke="#f01818" stroke-width="1.100"/>
<path d="M51.500 429.900V439.900L53.800 437.800L56 442.800L57.900 441.900L55.700 437.100L58.600 436.900Z" fill="#fff" stroke="#8a8a8a" stroke-width="0.8" stroke-linejoin="round"/>
<path d="M7.500 474.300L19.700 467.200L28.600 472.500L16 478.600Z M7.500 474.300V483.900L16 488.500V478.600 M16 488.500L28.600 481.400V472.500" fill="none" stroke="#1a1a1a" stroke-width="1" stroke-width="1.1" stroke-linejoin="round"/>
</svg>
<svg class="a" width="347" height="692" viewBox="1153 106 347 692" style="left:1153px;top:106px">
<defs>
<linearGradient id="gHdr" x1="0" y1="0" x2="0" y2="1"><stop offset="0" stop-color="#eeeeee"/><stop offset="0.5" stop-color="#e4e4e4"/><stop offset="0.9" stop-color="#d4d4d4"/><stop offset="1" stop-color="#c8c8c8"/></linearGradient>
<linearGradient id="gPB" x1="0" y1="0" x2="0" y2="1"><stop offset="0" stop-color="#e6e6e6"/><stop offset="0.5" stop-color="#f0f0f0"/><stop offset="1" stop-color="#f9f9f9"/></linearGradient>
<linearGradient id="gRT" x1="0" y1="0" x2="1" y2="0"><stop offset="0" stop-color="#eeeeee"/><stop offset="0.4" stop-color="#e2e2e2"/><stop offset="0.8" stop-color="#d0d0d0"/><stop offset="1" stop-color="#c2c2c2"/></linearGradient>
</defs>
<rect x="1153" y="108" width="2.4" height="690" fill="#efefef"/>
<rect x="1155" y="108" width="300" height="22.400" fill="url(#gHdr)"/><circle cx="1164" cy="118.2" r="7" fill="#6a6a6a"/><path d="M1161 115.2l6 6M1167 115.2l-6 6" stroke="#f4f4f4" stroke-width="2" stroke-linecap="round"/><circle cx="1182" cy="118.2" r="7" fill="#6a6a6a"/><rect x="1180.6" y="114.60000000000001" width="5.400" height="4.400" rx="0.600" fill="none" stroke="#f4f4f4" stroke-width="1.100"/><rect x="1178.2" y="117.0" width="5.400" height="4.400" rx="0.600" fill="#6a6a6a" stroke="#f4f4f4" stroke-width="1.100"/>
<rect x="1155.50" y="130.800" width="36.300" height="24.400" fill="url(#gPB)" stroke="#a6a6a6" stroke-width="1.500"/>
<rect x="1193.12" y="130.800" width="36.300" height="24.400" fill="url(#gPB)" stroke="#a6a6a6" stroke-width="1.500"/>
<rect x="1230.74" y="130.800" width="36.300" height="24.400" fill="url(#gPB)" stroke="#a6a6a6" stroke-width="1.500"/>
<rect x="1268.36" y="130.800" width="36.300" height="24.400" fill="url(#gPB)" stroke="#cdcdcd" stroke-width="1.500"/>
<rect x="1305.98" y="130.800" width="36.300" height="24.400" fill="url(#gPB)" stroke="#cdcdcd" stroke-width="1.500"/>
<rect x="1343.60" y="130.800" width="36.300" height="24.400" fill="url(#gPB)" stroke="#a6a6a6" stroke-width="1.500"/>
<rect x="1381.22" y="130.800" width="36.300" height="24.400" fill="url(#gPB)" stroke="#cdcdcd" stroke-width="1.500"/>
<rect x="1418.84" y="130.800" width="36.300" height="24.400" fill="url(#gPB)" stroke="#a6a6a6" stroke-width="1.500"/>
<g transform="translate(1166.35 137.50) scale(1.0)"><path d="M0 5.500C1.800 1.600 4.800 0 7.800 0C11 0 13.900 1.800 15.300 5.300C13.500 8.900 10.700 10.800 7.600 10.800C4.600 10.800 1.800 9.200 0 5.500Z" fill="#000"/><path d="M2.500 5.500C3.700 3.400 5.600 2.200 7.800 2.200C10 2.200 11.900 3.400 13 5.400C11.800 7.900 9.900 9.200 7.700 9.200C5.500 9.200 3.700 7.900 2.500 5.500Z" fill="#fff"/><circle cx="7.800" cy="4.500" r="3.100" fill="#000"/><circle cx="6.700" cy="3.700" r="0.650" fill="#fff"/></g>
<g transform="translate(1203.35 137.50) scale(1.0)"><path d="M0 5.500C1.800 1.600 4.800 0 7.800 0C11 0 13.900 1.800 15.300 5.300C13.500 8.900 10.700 10.800 7.600 10.800C4.600 10.800 1.800 9.200 0 5.500Z" fill="#a4a4a4"/><path d="M2.500 5.500C3.700 3.400 5.600 2.200 7.800 2.200C10 2.200 11.900 3.400 13 5.400C11.800 7.900 9.900 9.200 7.700 9.200C5.500 9.200 3.700 7.900 2.500 5.500Z" fill="#f0f0f0"/><circle cx="7.800" cy="4.500" r="3.100" fill="#a4a4a4"/><circle cx="6.700" cy="3.700" r="0.650" fill="#f0f0f0"/></g>
<path d="M1243 142.9h12M1249 136.9v12" stroke="#8a0000" stroke-width="3.600"/><path d="M1243.400 142.9h11.200M1249 137.3v11.200" stroke="#ff0a0a" stroke-width="2.800"/>
<path d="M1280.200 143.1h11.600" stroke="#f08484" stroke-width="3"/>
<text x="1316.600" y="147.400" font-family="Liberation Sans, sans-serif" font-size="11.600" letter-spacing="-0.550" fill="#8a8a8a">a|b</text>
<path d="M1354.0 149.6L1357.3 148.4L1355.3 146.3Z" fill="#e8c890" stroke="#8a6020" stroke-width="0.5"/><path d="M1354.0 149.6L1355.3 149.2L1354.4 148.3Z" fill="#3a2a10"/><path d="M1357.3 148.4L1366.7 139.3L1364.6 137.2L1355.3 146.3Z" fill="#f0a828" stroke="#a87010" stroke-width="0.5"/><path d="M1356.6 147.7L1366.0 138.6" stroke="#c88010" stroke-width="0.9"/><path d="M1366.7 139.3L1368.8 137.2L1366.8 135.2L1364.6 137.2Z" fill="#e82828" stroke="#a01818" stroke-width="0.5" stroke-linejoin="round"/>
<rect x="1393.200" y="136.200" width="11.600" height="12.800" fill="#e6e6ea" stroke="#d6d6da" stroke-width="0.500"/>
<path d="M1394.600 139.200q5.600 -2.400 6 3v3.400h2.800l-4.200 4l-4.200 -4h2.800v-3.400q-0.200 -2 -3.200 -1.400z" fill="#8aa4f4"/>
<rect x="1431.300" y="138.200" width="9.800" height="9.800" rx="1" fill="#e8784a" stroke="#e43030" stroke-width="1"/>
<path d="M1433.800 140.700l4.800 4.800M1438.600 140.700l-4.800 4.800" stroke="#fff" stroke-width="1.700"/>
<rect x="1155.300" y="156.700" width="299" height="151" fill="#fff" stroke="#cacaca" stroke-width="1"/>
<g transform="translate(1161.05 161.90) scale(1.0)"><path d="M0 5.500C1.800 1.600 4.800 0 7.800 0C11 0 13.900 1.800 15.300 5.300C13.500 8.900 10.700 10.800 7.600 10.800C4.600 10.800 1.800 9.200 0 5.500Z" fill="#000"/><path d="M2.500 5.500C3.700 3.400 5.600 2.200 7.800 2.200C10 2.200 11.900 3.400 13 5.400C11.800 7.900 9.900 9.200 7.700 9.200C5.500 9.200 3.700 7.900 2.500 5.500Z" fill="#fff"/><circle cx="7.800" cy="4.500" r="3.100" fill="#000"/><circle cx="6.700" cy="3.700" r="0.650" fill="#fff"/></g>
<g transform="translate(1161.05 181.90) scale(1.0)"><path d="M0 5.500C1.800 1.600 4.800 0 7.800 0C11 0 13.900 1.800 15.300 5.300C13.500 8.900 10.700 10.800 7.600 10.800C4.600 10.800 1.800 9.200 0 5.500Z" fill="#000"/><path d="M2.500 5.500C3.700 3.400 5.600 2.200 7.800 2.200C10 2.200 11.900 3.400 13 5.400C11.800 7.900 9.900 9.200 7.700 9.200C5.500 9.200 3.700 7.900 2.500 5.500Z" fill="#fff"/><circle cx="7.800" cy="4.500" r="3.100" fill="#000"/><circle cx="6.700" cy="3.700" r="0.650" fill="#fff"/></g>
<g transform="translate(1161.05 201.90) scale(1.0)"><path d="M0 5.500C1.800 1.600 4.800 0 7.800 0C11 0 13.900 1.800 15.300 5.300C13.500 8.900 10.700 10.800 7.600 10.800C4.600 10.800 1.800 9.200 0 5.500Z" fill="#000"/><path d="M2.500 5.500C3.700 3.400 5.600 2.200 7.800 2.200C10 2.200 11.900 3.400 13 5.400C11.800 7.900 9.900 9.200 7.700 9.200C5.500 9.200 3.700 7.900 2.500 5.500Z" fill="#fff"/><circle cx="7.800" cy="4.500" r="3.100" fill="#000"/><circle cx="6.700" cy="3.700" r="0.650" fill="#fff"/></g>
<g transform="translate(1161.05 221.90) scale(1.0)"><path d="M0 5.500C1.800 1.600 4.800 0 7.800 0C11 0 13.900 1.800 15.300 5.300C13.500 8.900 10.700 10.800 7.600 10.800C4.600 10.800 1.800 9.200 0 5.500Z" fill="#000"/><path d="M2.500 5.500C3.700 3.400 5.600 2.200 7.800 2.200C10 2.200 11.900 3.400 13 5.400C11.800 7.900 9.900 9.200 7.700 9.200C5.500 9.200 3.700 7.900 2.500 5.500Z" fill="#fff"/><circle cx="7.800" cy="4.500" r="3.100" fill="#000"/><circle cx="6.700" cy="3.700" r="0.650" fill="#fff"/></g>
<g transform="translate(1161.05 241.90) scale(1.0)"><path d="M0 5.500C1.800 1.600 4.800 0 7.800 0C11 0 13.900 1.800 15.300 5.300C13.500 8.900 10.700 10.800 7.600 10.800C4.600 10.800 1.800 9.200 0 5.500Z" fill="#000"/><path d="M2.500 5.500C3.700 3.400 5.600 2.200 7.800 2.200C10 2.200 11.900 3.400 13 5.400C11.800 7.900 9.900 9.200 7.700 9.200C5.500 9.200 3.700 7.900 2.500 5.500Z" fill="#fff"/><circle cx="7.800" cy="4.500" r="3.100" fill="#000"/><circle cx="6.700" cy="3.700" r="0.650" fill="#fff"/></g>
<g transform="translate(1161.05 261.90) scale(1.0)"><path d="M0 5.500C1.800 1.600 4.800 0 7.800 0C11 0 13.900 1.800 15.300 5.300C13.500 8.900 10.700 10.800 7.600 10.800C4.600 10.800 1.800 9.200 0 5.500Z" fill="#000"/><path d="M2.500 5.500C3.700 3.400 5.600 2.200 7.800 2.200C10 2.200 11.900 3.400 13 5.400C11.800 7.900 9.900 9.200 7.700 9.200C5.500 9.200 3.700 7.900 2.500 5.500Z" fill="#fff"/><circle cx="7.800" cy="4.500" r="3.100" fill="#000"/><circle cx="6.700" cy="3.700" r="0.650" fill="#fff"/></g>
<path d="M1184.2 173.8L1187.5 172.5L1185.5 170.5Z" fill="#e8c890" stroke="#8a6020" stroke-width="0.5"/><path d="M1184.2 173.8L1185.5 173.4L1184.6 172.5Z" fill="#3a2a10"/><path d="M1187.5 172.5L1196.5 163.5L1194.5 161.5L1185.5 170.5Z" fill="#f0a828" stroke="#a87010" stroke-width="0.5"/><path d="M1186.8 171.8L1195.8 162.8" stroke="#c88010" stroke-width="0.9"/><path d="M1196.5 163.5L1198.6 161.4L1196.6 159.4L1194.5 161.5Z" fill="#e82828" stroke="#a01818" stroke-width="0.5" stroke-linejoin="round"/>
<rect x="1155" y="308.8" width="300" height="22.400" fill="url(#gHdr)"/><circle cx="1164" cy="319.0" r="7" fill="#6a6a6a"/><path d="M1161 316.0l6 6M1167 316.0l-6 6" stroke="#f4f4f4" stroke-width="2" stroke-linecap="round"/><circle cx="1182" cy="319.0" r="7" fill="#6a6a6a"/><rect x="1180.6" y="315.4" width="5.400" height="4.400" rx="0.600" fill="none" stroke="#f4f4f4" stroke-width="1.100"/><rect x="1178.2" y="317.8" width="5.400" height="4.400" rx="0.600" fill="#6a6a6a" stroke="#f4f4f4" stroke-width="1.100"/>
<rect x="1155.50" y="331.800" width="58.800" height="24.600" fill="url(#gPB)" stroke="#a6a6a6" stroke-width="1.500"/>
<rect x="1215.55" y="331.800" width="58.800" height="24.600" fill="url(#gPB)" stroke="#a6a6a6" stroke-width="1.500"/>
<rect x="1275.60" y="331.800" width="58.800" height="24.600" fill="url(#gPB)" stroke="#a6a6a6" stroke-width="1.500"/>
<rect x="1335.65" y="331.800" width="58.800" height="24.600" fill="url(#gPB)" stroke="#a6a6a6" stroke-width="1.500"/>
<rect x="1395.70" y="331.800" width="58.800" height="24.600" fill="url(#gPB)" stroke="#a6a6a6" stroke-width="1.500"/>
<g transform="translate(1177.35 338.60) scale(1.0)"><path d="M0 5.500C1.800 1.600 4.800 0 7.800 0C11 0 13.900 1.800 15.300 5.300C13.500 8.900 10.700 10.800 7.600 10.800C4.600 10.800 1.800 9.200 0 5.500Z" fill="#000"/><path d="M2.500 5.500C3.700 3.400 5.600 2.200 7.800 2.200C10 2.200 11.900 3.400 13 5.400C11.800 7.900 9.900 9.200 7.700 9.200C5.500 9.200 3.700 7.900 2.500 5.500Z" fill="#fff"/><circle cx="7.800" cy="4.500" r="3.100" fill="#000"/><circle cx="6.700" cy="3.700" r="0.650" fill="#fff"/></g>
<g transform="translate(1237.35 338.60) scale(1.0)"><path d="M0 5.500C1.800 1.600 4.800 0 7.800 0C11 0 13.900 1.800 15.300 5.300C13.500 8.900 10.700 10.800 7.600 10.800C4.600 10.800 1.800 9.200 0 5.500Z" fill="#a4a4a4"/><path d="M2.500 5.500C3.700 3.400 5.600 2.200 7.800 2.200C10 2.200 11.900 3.400 13 5.400C11.800 7.900 9.900 9.200 7.700 9.200C5.500 9.200 3.700 7.900 2.500 5.500Z" fill="#f0f0f0"/><circle cx="7.800" cy="4.500" r="3.100" fill="#a4a4a4"/><circle cx="6.700" cy="3.700" r="0.650" fill="#f0f0f0"/></g>
<path d="M1299 344h12M1305 338v12" stroke="#8a0000" stroke-width="3.600"/><path d="M1299.400 344h11.200M1305 338.4v11.200" stroke="#ff0a0a" stroke-width="2.800"/>
<path d="M1359 344h12" stroke="#8a0000" stroke-width="3.600"/><path d="M1359.400 344h11.200" stroke="#ff0a0a" stroke-width="2.800"/>
<path d="M1418.0 350.8L1421.3 349.6L1419.3 347.5Z" fill="#e8c890" stroke="#8a6020" stroke-width="0.5"/><path d="M1418.0 350.8L1419.3 350.4L1418.4 349.5Z" fill="#3a2a10"/><path d="M1421.3 349.6L1430.7 340.5L1428.6 338.4L1419.3 347.5Z" fill="#f0a828" stroke="#a87010" stroke-width="0.5"/><path d="M1420.6 348.9L1430.0 339.8" stroke="#c88010" stroke-width="0.9"/><path d="M1430.7 340.5L1432.8 338.4L1430.8 336.4L1428.6 338.4Z" fill="#e82828" stroke="#a01818" stroke-width="0.5" stroke-linejoin="round"/>
<rect x="1155.300" y="357.700" width="299" height="441" fill="#fff" stroke="#cacaca" stroke-width="1"/>
<rect x="1156.200" y="418.200" width="298" height="20" fill="#0a49d6"/>
<rect x="1161.200" y="364.2" width="15.600" height="8.800" fill="#ffffff" stroke="#000" stroke-width="1"/>
<g transform="translate(1415.45 362.30) scale(1.0)"><path d="M0 5.500C1.800 1.600 4.800 0 7.800 0C11 0 13.900 1.800 15.300 5.300C13.500 8.900 10.700 10.800 7.600 10.800C4.600 10.800 1.800 9.200 0 5.500Z" fill="#000"/><path d="M2.500 5.500C3.700 3.400 5.600 2.200 7.800 2.200C10 2.200 11.900 3.400 13 5.400C11.800 7.900 9.900 9.200 7.700 9.200C5.500 9.200 3.700 7.900 2.500 5.500Z" fill="#fff"/><circle cx="7.800" cy="4.500" r="3.100" fill="#000"/><circle cx="6.700" cy="3.700" r="0.650" fill="#fff"/></g>
<path d="M1442.0 367.4V365.8A3.300 3.300 0 0 1 1448.6 365.8V367.4" fill="none" stroke="#c4c4c4" stroke-width="1.500"/><rect x="1440.3" y="367.0" width="10" height="7.800" fill="#b4b4b4"/>
<rect x="1161.200" y="384.2" width="15.600" height="8.800" fill="#d4a85c" stroke="#000" stroke-width="1"/>
<g transform="translate(1415.45 382.30) scale(1.0)"><path d="M0 5.500C1.800 1.600 4.800 0 7.800 0C11 0 13.900 1.800 15.300 5.300C13.500 8.900 10.700 10.800 7.600 10.800C4.600 10.800 1.800 9.200 0 5.500Z" fill="#000"/><path d="M2.500 5.500C3.700 3.400 5.600 2.200 7.800 2.200C10 2.200 11.900 3.400 13 5.400C11.800 7.900 9.900 9.200 7.700 9.200C5.500 9.200 3.700 7.900 2.500 5.500Z" fill="#fff"/><circle cx="7.800" cy="4.500" r="3.100" fill="#000"/><circle cx="6.700" cy="3.700" r="0.650" fill="#fff"/></g>
<path d="M1442.0 387.4V385.8A3.300 3.300 0 0 1 1448.6 385.8V387.4" fill="none" stroke="#c4c4c4" stroke-width="1.500"/><rect x="1440.3" y="387.0" width="10" height="7.800" fill="#b4b4b4"/>
<rect x="1161.200" y="404.2" width="15.600" height="8.800" fill="#c0c0c0" stroke="#000" stroke-width="1"/>
<g transform="translate(1415.45 402.30) scale(1.0)"><path d="M0 5.500C1.800 1.600 4.800 0 7.800 0C11 0 13.900 1.800 15.300 5.300C13.500 8.900 10.700 10.800 7.600 10.800C4.600 10.800 1.800 9.200 0 5.500Z" fill="#000"/><path d="M2.500 5.500C3.700 3.400 5.600 2.200 7.800 2.200C10 2.200 11.900 3.400 13 5.400C11.800 7.900 9.900 9.200 7.700 9.200C5.500 9.200 3.700 7.900 2.500 5.500Z" fill="#fff"/><circle cx="7.800" cy="4.500" r="3.100" fill="#000"/><circle cx="6.700" cy="3.700" r="0.650" fill="#fff"/></g>
<path d="M1442.0 407.4V405.8A3.300 3.300 0 0 1 1448.6 405.8V407.4" fill="none" stroke="#c4c4c4" stroke-width="1.500"/><rect x="1440.3" y="407.0" width="10" height="7.800" fill="#b4b4b4"/>
<rect x="1161.200" y="424.2" width="15.600" height="8.800" fill="#70a860" stroke="#000" stroke-width="1"/>
<g transform="translate(1415.45 422.30) scale(1.0)"><path d="M0 5.500C1.800 1.600 4.800 0 7.800 0C11 0 13.900 1.800 15.300 5.300C13.500 8.900 10.700 10.800 7.600 10.800C4.600 10.800 1.800 9.200 0 5.500Z" fill="#1a3784"/><path d="M2.500 5.500C3.700 3.400 5.600 2.200 7.800 2.200C10 2.200 11.900 3.400 13 5.400C11.800 7.900 9.900 9.200 7.700 9.200C5.500 9.200 3.700 7.900 2.500 5.500Z" fill="#0a49d6"/><circle cx="7.800" cy="4.500" r="3.100" fill="#1a3784"/><circle cx="6.700" cy="3.700" r="0.650" fill="#0a49d6"/></g>
<path d="M1442.0 427.4V425.8A3.300 3.300 0 0 1 1448.6 425.8V427.4" fill="none" stroke="#e8ecf6" stroke-width="1.500"/><rect x="1440.3" y="427.0" width="10" height="7.800" fill="#a9b8d8"/>
<path d="M1395.0 434.6L1398.2 433.3L1396.3 431.4Z" fill="#e8c890" stroke="#8a6020" stroke-width="0.5"/><path d="M1395.0 434.6L1396.3 434.2L1395.4 433.3Z" fill="#3a2a10"/><path d="M1398.2 433.3L1406.4 425.1L1404.5 423.2L1396.3 431.4Z" fill="#f0a828" stroke="#a87010" stroke-width="0.5"/><path d="M1397.5 432.6L1405.8 424.4" stroke="#c88010" stroke-width="0.9"/><path d="M1406.4 425.1L1408.6 423.0L1406.6 421.0L1404.5 423.2Z" fill="#e82828" stroke="#a01818" stroke-width="0.5" stroke-linejoin="round"/>
<rect x="1455" y="108" width="45" height="690" fill="url(#gRT)"/>
<rect x="1454.500" y="108" width="1" height="690" fill="#d4d4d4"/>
<rect x="1462" y="116" width="2" height="2" fill="#a2a2a2"/>
<rect x="1468" y="116" width="2" height="2" fill="#a2a2a2"/>
<rect x="1474" y="116" width="2" height="2" fill="#a2a2a2"/>
<rect x="1480" y="116" width="2" height="2" fill="#a2a2a2"/>
<rect x="1486" y="116" width="2" height="2" fill="#a2a2a2"/>
<rect x="1456.200" y="120.4" width="44" height="42.600" rx="4" fill="#b9b9b9"/>
<rect x="1456.200" y="167.2" width="44" height="42.600" rx="4" fill="#b9b9b9"/>
<rect x="1456.200" y="418.2" width="44" height="42.600" rx="4" fill="#b9b9b9"/>
<path d="M1458 262.5H1499" stroke="#555" stroke-width="1" stroke-dasharray="1 2" shape-rendering="crispEdges"/>
<path d="M1458 410.5H1499" stroke="#555" stroke-width="1" stroke-dasharray="1 2" shape-rendering="crispEdges"/>
<rect x="1463.300" y="127.4" width="27.400" height="27" fill="#fff" stroke="#222" stroke-width="0.600"/>
<rect x="1463" y="127.1" width="28" height="4.500" fill="#000"/>
<rect x="1464" y="127.9" width="2.600" height="2.800" fill="#fff"/>
<rect x="1463.300" y="174.3" width="27.400" height="27" fill="#fff" stroke="#222" stroke-width="0.600"/>
<rect x="1463" y="174.0" width="28" height="4.500" fill="#000"/>
<rect x="1464" y="174.8" width="2.600" height="2.800" fill="#fff"/>
<rect x="1463.300" y="221.3" width="27.400" height="27" fill="#fff" stroke="#222" stroke-width="0.600"/>
<rect x="1463" y="221.0" width="28" height="4.500" fill="#000"/>
<rect x="1464" y="221.8" width="2.600" height="2.800" fill="#fff"/>
<rect x="1463.300" y="277" width="27.400" height="27" fill="#fff" stroke="#222" stroke-width="0.600"/>
<rect x="1463" y="276.7" width="28" height="4.500" fill="#000"/>
<rect x="1464" y="277.5" width="2.600" height="2.800" fill="#fff"/>
<rect x="1463.300" y="323.7" width="27.400" height="27" fill="#fff" stroke="#222" stroke-width="0.600"/>
<rect x="1463" y="323.4" width="28" height="4.500" fill="#000"/>
<rect x="1464" y="324.2" width="2.600" height="2.800" fill="#fff"/>
<rect x="1463.300" y="369.6" width="27.400" height="27" fill="#fff" stroke="#222" stroke-width="0.600"/>
<rect x="1463" y="369.3" width="28" height="4.500" fill="#000"/>
<rect x="1464" y="370.1" width="2.600" height="2.800" fill="#fff"/>
<rect x="1463.300" y="425.1" width="27.400" height="27" fill="#fff" stroke="#222" stroke-width="0.600"/>
<rect x="1463" y="424.8" width="28" height="4.500" fill="#000"/>
<rect x="1464" y="425.6" width="2.600" height="2.800" fill="#fff"/>
<rect x="1463.300" y="472.2" width="27.400" height="27" fill="#fff" stroke="#222" stroke-width="0.600"/>
<rect x="1463" y="471.9" width="28" height="4.500" fill="#000"/>
<rect x="1464" y="472.7" width="2.600" height="2.800" fill="#fff"/>
<path d="M1470.500 139.4l7 -4v9.600l-7 4z" fill="#9a9a9a" stroke="#5a5a5a" stroke-width="0.500"/><path d="M1472.500 139.6l7 -4v9.600l-7 4z" fill="#b4b4b4" stroke="#5a5a5a" stroke-width="0.500"/><path d="M1474.800 139.8l8.400 -4.600v9.800l-8.400 4.600z" fill="#f6f6f6" stroke="#5a5a5a" stroke-width="0.500"/>
<path d="M1476.600 147.0l4.400 -8.600l0.600 6.400M1477.800 144.8l3 -1.600" stroke="#e03030" stroke-width="0.800" fill="none"/>
<rect x="1470.400" y="184.9" width="10" height="7.600" fill="#f6ecc0" stroke="#8a8a7a" stroke-width="0.600"/><circle cx="1479.300" cy="191.9" r="4.600" fill="#f6ecc0" fill-opacity="0.850" stroke="#8a8a7a" stroke-width="0.600"/>
<rect x="1468.800" y="231.70000000000002" width="16.400" height="11" rx="2" fill="#f4f4f0" stroke="#c4d4ec" stroke-width="0.800"/>
<rect x="1466" y="285.2" width="4.400" height="3" rx="0.600" fill="#000"/><rect x="1473.400" y="285.2" width="14" height="3" fill="#fff" stroke="#444" stroke-width="0.500"/>
<rect x="1466" y="291.3" width="4.400" height="3" rx="0.600" fill="#000"/><rect x="1473.400" y="291.3" width="14" height="3" fill="#fff" stroke="#444" stroke-width="0.500"/>
<rect x="1466" y="297.4" width="4.400" height="3" rx="0.600" fill="#000"/><rect x="1473.400" y="297.4" width="14" height="3" fill="#fff" stroke="#444" stroke-width="0.500"/>
<path d="M1470 333.3q7 -2.600 14 0l-5.400 7.200v6.200l-3.200 -1.600v-4.600z" fill="#a8a8a8" stroke="#6a6a6a" stroke-width="0.500"/><ellipse cx="1477" cy="333.5" rx="7" ry="1.500" fill="#d0d0d0" stroke="#6a6a6a" stroke-width="0.500"/>
<path d="M1469.400 379.0l4.400 2.800h10.600q1 0 1 1v5.200q0 1 -1 1h-10.600l-4.400 2.800z" fill="#dcdcdc" stroke="#5a5a5a" stroke-width="0.600"/><rect x="1478" y="382.0" width="6.600" height="7.200" fill="#8a8a8a"/><path d="M1467.400 385.6h20" stroke="#f49a9a" stroke-width="0.700" stroke-dasharray="2.400 1"/>
<path d="M1465.600 433.5h12" stroke="#6a6a6a" stroke-width="1.100" stroke-dasharray="3.400 0.800 5 0.800"/>
<path d="M1465.600 436.9h13.5" stroke="#6a6a6a" stroke-width="1.100" stroke-dasharray="3.400 0.800 5 0.800"/>
<path d="M1465.600 440.3h16" stroke="#6a6a6a" stroke-width="1.100" stroke-dasharray="3.400 0.800 5 0.800"/>
<path d="M1465.600 443.7h16.5" stroke="#6a6a6a" stroke-width="1.100" stroke-dasharray="3.400 0.800 5 0.800"/>
<path d="M1463.300 447.3h27.400" stroke="#222" stroke-width="0.600"/><path d="M1466 449.90000000000003h3M1472.400 449.90000000000003h15" stroke="#333" stroke-width="1.200" stroke-dasharray="1.600 0.500"/>
<rect x="1470.800" y="481.59999999999997" width="12.400" height="13.400" rx="0.800" fill="#c88a24" stroke="#8a5a10" stroke-width="0.500"/><path d="M1472.400 483.0h9.200v8l-2.400 2.400h-6.800z" fill="#f4f4f4"/><path d="M1473.600 485.2h6.800M1473.600 487.0h6.800M1473.600 488.8h5" stroke="#c0c0c0" stroke-width="0.700"/><rect x="1474.400" y="480.0" width="5.200" height="2.800" rx="0.600" fill="#8e8e82" stroke="#5e5e56" stroke-width="0.400"/><path d="M1479.200 493.4v-2.400h2.400z" fill="#9a9a9a"/>
</svg>
<svg class="a" width="90" height="90" viewBox="1258 381 90 90" style="left:1258px;top:381px"><defs><radialGradient id="gRing" cx="0.5" cy="0.5" r="0.5"><stop offset="0" stop-color="#fff" stop-opacity="0"/><stop offset="0.78" stop-color="#e4eaf0" stop-opacity="0"/><stop offset="0.85" stop-color="#ccd6e0" stop-opacity="0.35"/><stop offset="0.9" stop-color="#b4c2d2" stop-opacity="0.85"/><stop offset="0.94" stop-color="#bccad8" stop-opacity="0.75"/><stop offset="0.975" stop-color="#d0dae4" stop-opacity="0.35"/><stop offset="1" stop-color="#dfe6ec" stop-opacity="0"/></radialGradient></defs><circle cx="1303" cy="425.800" r="40.500" fill="url(#gRing)"/><path d="M1303.400 425.400V447.800L1308.900 442.700L1313.500 452.900L1317.300 451.200L1312.900 441.200L1318.200 440.700Z" fill="#fff" stroke="#000" stroke-width="1.200" stroke-linejoin="round"/></svg>
<svg class="a" width="20" height="32" viewBox="716 805 20 32" style="left:716px;top:805px"><rect x="717.400" y="806.300" width="17.200" height="29.300" rx="8.600" fill="#fff" stroke="#4a4a4a" stroke-width="0.800"/><path d="M717.400 819.600q8.600 -2 17.200 0" fill="none" stroke="#333" stroke-width="1.500"/><path d="M726 806.400v2.200M726 815.400v3.400" stroke="#333" stroke-width="1.200"/><rect x="724.600" y="808.400" width="2.800" height="7.200" rx="1.400" fill="#fff" stroke="#333" stroke-width="0.900"/></svg>
<svg class="a" width="18" height="18" viewBox="93 110 18 18" style="left:93px;top:110px">
<defs><linearGradient id="gQ" x1="0" y1="0" x2="1" y2="1"><stop offset="0" stop-color="#8c9cc8"/><stop offset="0.45" stop-color="#2a4490"/><stop offset="1" stop-color="#1a3278"/></linearGradient></defs>
<circle cx="102.1" cy="118.7" r="5.5" fill="#f8f8f8" stroke="url(#gQ)" stroke-width="2"/>
<path d="M98.600 118.500h6M101.600 115.400v6.400" stroke="#b0b0b0" stroke-width="0.600"/>
<path d="M98.800 120.400h3" stroke="#e89090" stroke-width="0.600"/>
<path d="M102.400 119.100L107.200 123.700" stroke="#f4a418" stroke-width="2.200" stroke-linecap="round"/>
<path d="M106.600 123.100L107.700 124.200" stroke="#e87070" stroke-width="2.200" stroke-linecap="round"/>
</svg>
<div id="menutext" class="a" style="left:0;top:0;color:#262626">
<span class="t" style="left:13.40px;top:1px;font-size:13.5px;line-height:20px;letter-spacing:-0.068px;">Fichier</span><span class="t" style="left:66.20px;top:1px;font-size:13.5px;line-height:20px;letter-spacing:0.105px;">Édition</span><span class="t" style="left:120.80px;top:1px;font-size:13.5px;line-height:20px;letter-spacing:0.108px;">Affichage</span><span class="t" style="left:190.40px;top:1px;font-size:13.5px;line-height:20px;letter-spacing:-0.141px;">Sélectionner</span><span class="t" style="left:276.60px;top:1px;font-size:13.5px;line-height:20px;letter-spacing:-0.031px;">Dessin</span><span class="t" style="left:330.60px;top:1px;font-size:13.5px;line-height:20px;letter-spacing:0.004px;">Cotation</span><span class="t" style="left:392.60px;top:1px;font-size:13.5px;line-height:20px;letter-spacing:0.126px;">Modifier</span><span class="t" style="left:455.60px;top:1px;font-size:13.5px;line-height:20px;letter-spacing:-0.042px;">Accrochage</span><span class="t" style="left:538.60px;top:1px;font-size:13.5px;line-height:20px;letter-spacing:-0.229px;">Infos</span><span class="t" style="left:580.40px;top:1px;font-size:13.5px;line-height:20px;letter-spacing:-0.215px;">Calque</span><span class="t" style="left:633.80px;top:1px;font-size:13.5px;line-height:20px;letter-spacing:-0.104px;">Bloc</span><span class="t" style="left:672.60px;top:1px;font-size:13.5px;line-height:20px;letter-spacing:-0.103px;">Fenêtre</span><span class="t" style="left:730.20px;top:1px;font-size:13.5px;line-height:20px;letter-spacing:-0.140px;">Divers</span><span class="t" style="left:781.60px;top:1px;font-size:13.5px;line-height:20px;letter-spacing:-0.304px;">Aide</span>
</div>
<span class="t" style="left:606.50px;top:113px;font-size:11px;line-height:16px;letter-spacing:0.377px;color:#1e1e1e;-webkit-text-stroke:0.1px #1e1e1e;">* park.dxf</span>
<span class="t" style="left:1282.90px;top:112px;font-size:11px;line-height:16px;letter-spacing:0.396px;color:#2a2a2a;-webkit-text-stroke:0.05px #2a2a2a;">Liste des blocs</span>
<span class="t" style="left:1277.00px;top:313px;font-size:11px;line-height:16px;letter-spacing:0.344px;color:#2a2a2a;-webkit-text-stroke:0.05px #2a2a2a;">Liste des calques</span>
<span class="t" style="left:1204.70px;top:158px;font-size:13.5px;line-height:20px;letter-spacing:0.009px;color:#111;">Model (*Model_Space)</span>
<span class="t" style="left:1204.70px;top:178px;font-size:13.5px;line-height:20px;letter-spacing:-0.174px;color:#111;">Layout1 (*Paper_Space)</span>
<span class="t" style="left:1205.70px;top:198px;font-size:13.5px;line-height:20px;letter-spacing:-0.310px;color:#111;">Arbre A</span>
<span class="t" style="left:1205.70px;top:218px;font-size:13.5px;line-height:20px;letter-spacing:-0.360px;color:#111;">Arbre B</span>
<span class="t" style="left:1204.70px;top:238px;font-size:13.5px;line-height:20px;letter-spacing:-0.340px;color:#111;">Banc</span>
<span class="t" style="left:1204.70px;top:258px;font-size:13.5px;line-height:20px;letter-spacing:-0.091px;color:#111;">Poubelle</span>
<span class="t" style="left:1183.20px;top:358px;font-size:13.5px;line-height:20px;letter-spacing:0.200px;color:#111;">0</span>
<span class="t" style="left:1182.80px;top:378px;font-size:13.5px;line-height:20px;letter-spacing:-0.286px;color:#111;">Chemins</span>
<span class="t" style="left:1183.00px;top:398px;font-size:13.5px;line-height:20px;letter-spacing:0.005px;color:#111;">Installations</span>
<span class="t" style="left:1183.00px;top:418px;font-size:13.5px;line-height:20px;letter-spacing:-0.213px;color:#fff;">Plantes</span>
<span class="t" style="left:77.60px;top:749px;font-size:12.5px;line-height:19px;letter-spacing:0.399px;color:#0000d4;font-style:italic;">Commande:</span><span class="t" style="left:153.20px;top:749px;font-size:12.5px;line-height:19px;letter-spacing:0.848px;color:#0000d4;">gb</span>
<span class="t" style="left:73.40px;top:776px;font-size:13px;line-height:20px;letter-spacing:0.132px;color:#111;">Commande :</span>
<span class="t" style="left:1119.00px;top:732px;font-size:12.5px;line-height:19px;letter-spacing:-0.190px;color:#111;">1 &lt; 10</span>
<span class="t" style="left:2.00px;top:807px;font-size:9.5px;line-height:14px;letter-spacing:0.183px;color:#1e1e1e;-webkit-text-stroke:0.25px #1e1e1e;">47.0937,12.7851</span>
<span class="t" style="left:2.00px;top:827px;font-size:9.5px;line-height:14px;letter-spacing:0.088px;color:#1e1e1e;-webkit-text-stroke:0.25px #1e1e1e;">@47.0937,12.7851</span>
<span class="t" style="left:256.20px;top:807px;font-size:9.5px;line-height:14px;letter-spacing:0.435px;color:#1e1e1e;-webkit-text-stroke:0.25px #1e1e1e;">48.7984&lt;15°</span>
<span class="t" style="left:256.20px;top:827px;font-size:9.5px;line-height:14px;letter-spacing:0.273px;color:#1e1e1e;-webkit-text-stroke:0.25px #1e1e1e;">@48.7984&lt;15°</span>
<span class="t" style="left:949.30px;top:817px;font-size:9.5px;line-height:14px;letter-spacing:0.358px;color:#1e1e1e;-webkit-text-stroke:0.25px #1e1e1e;">Aucune des entités sélectionnées.</span>
</div>
</body>
</html>
